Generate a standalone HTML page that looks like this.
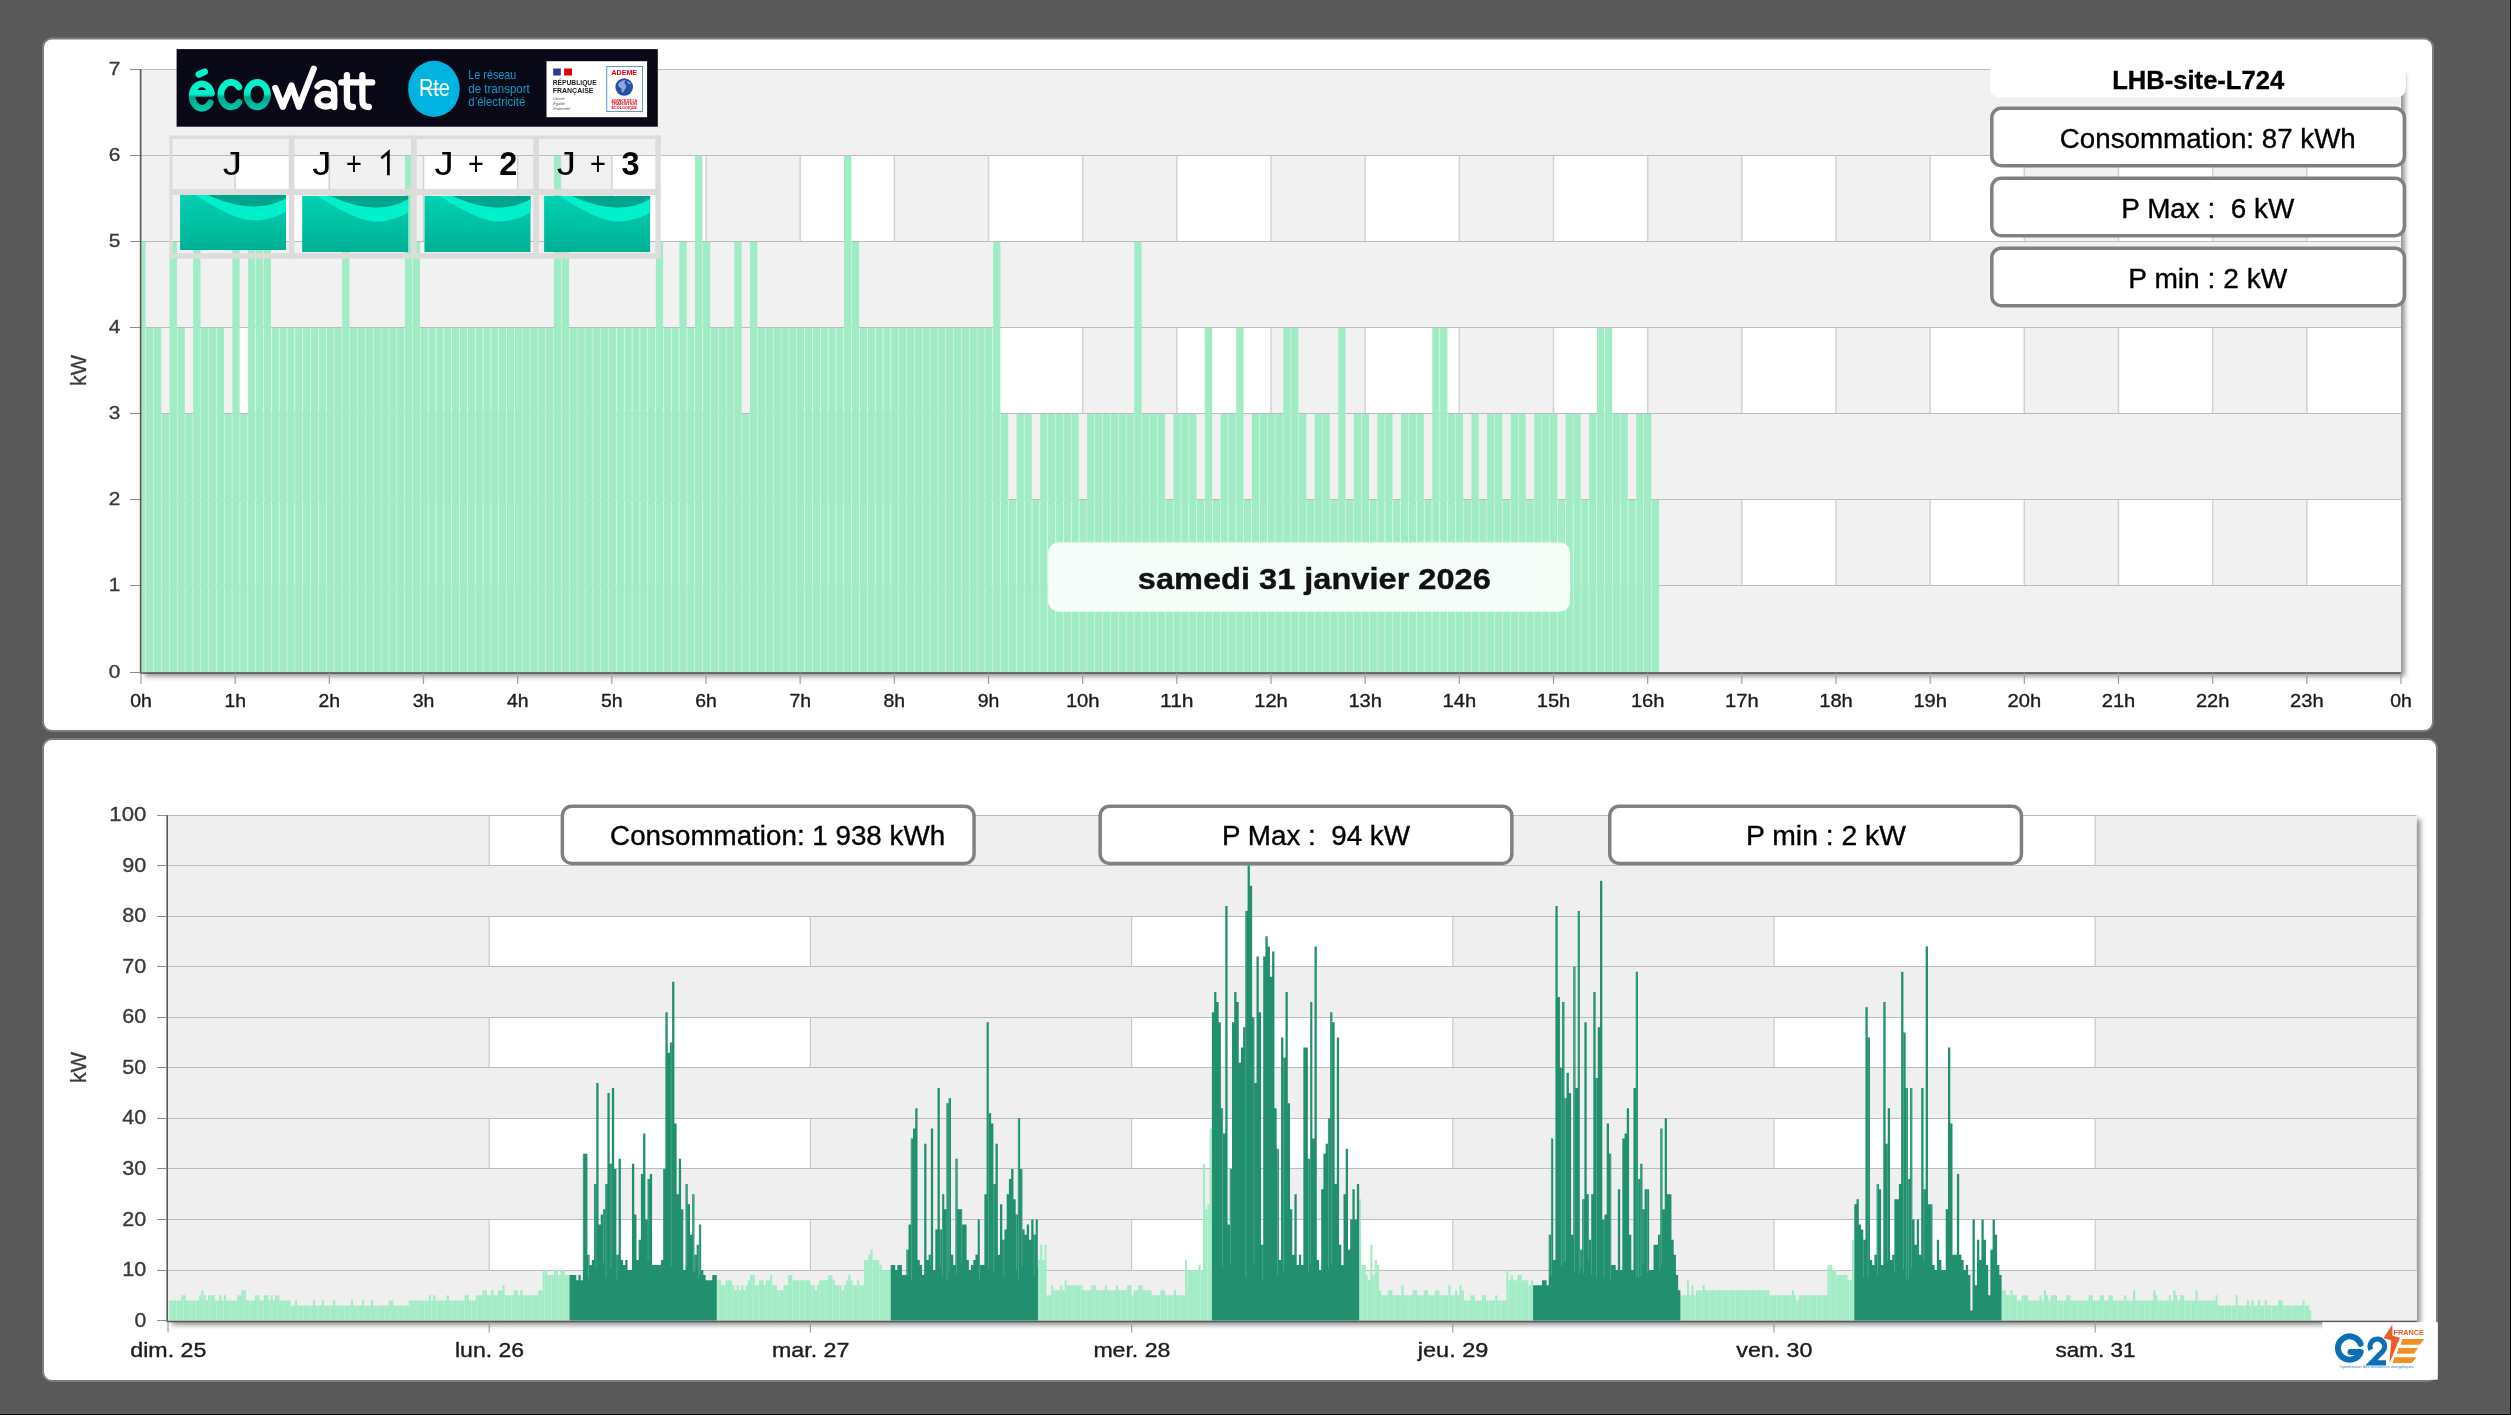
<!DOCTYPE html>
<html lang="fr"><head><meta charset="utf-8"><title>Courbe de charge</title>
<style>html,body{margin:0;padding:0;background:#595959;}body{width:2511px;height:1415px;overflow:hidden;font-family:"Liberation Sans",sans-serif;}</style></head>
<body>
<svg width="2511" height="1415" viewBox="0 0 2511 1415" font-family="Liberation Sans, sans-serif" style="display:block;will-change:transform">
<defs>
<linearGradient id="shR" x1="0" x2="1" y1="0" y2="0"><stop offset="0" stop-color="#000" stop-opacity=".38"/><stop offset=".5" stop-color="#000" stop-opacity=".12"/><stop offset="1" stop-color="#000" stop-opacity="0"/></linearGradient>
<linearGradient id="shB" x1="0" x2="0" y1="0" y2="1"><stop offset="0" stop-color="#000" stop-opacity=".38"/><stop offset=".5" stop-color="#000" stop-opacity=".12"/><stop offset="1" stop-color="#000" stop-opacity="0"/></linearGradient>
<linearGradient id="pic" x1="0" x2="0" y1="0" y2="1"><stop offset="0" stop-color="#00d2b2"/><stop offset="1" stop-color="#00b094"/></linearGradient>
<linearGradient id="eco" x1="0" x2="0" y1="0" y2="1"><stop offset="0" stop-color="#00f0c8"/><stop offset=".5" stop-color="#00f0c8"/><stop offset=".62" stop-color="#00a88e"/><stop offset="1" stop-color="#00c8a8"/></linearGradient>
<filter id="ds" x="-2%" y="-5%" width="104%" height="110%"><feGaussianBlur stdDeviation="2.4"/></filter>
</defs>
<rect width="2511" height="1415" fill="#595959"/>
<rect x="43" y="38.5" width="2390" height="692.5" rx="9" fill="#fff" stroke="#7e7e7e" stroke-width="2"/>
<rect x="43" y="739" width="2394" height="642" rx="9" fill="#fff" stroke="#7e7e7e" stroke-width="2"/>
<rect x="145.0" y="73.0" width="2260.0" height="603.5" fill="#000" fill-opacity=".42" filter="url(#ds)"/>
<rect x="141.0" y="69.0" width="2260.0" height="603.0" fill="#fff"/>
<rect x="141.00" y="69.0" width="94.17" height="603.0" fill="#f1f1f1"/>
<rect x="329.33" y="69.0" width="94.17" height="603.0" fill="#f1f1f1"/>
<rect x="517.67" y="69.0" width="94.17" height="603.0" fill="#f1f1f1"/>
<rect x="706.00" y="69.0" width="94.17" height="603.0" fill="#f1f1f1"/>
<rect x="894.33" y="69.0" width="94.17" height="603.0" fill="#f1f1f1"/>
<rect x="1082.67" y="69.0" width="94.17" height="603.0" fill="#f1f1f1"/>
<rect x="1271.00" y="69.0" width="94.17" height="603.0" fill="#f1f1f1"/>
<rect x="1459.33" y="69.0" width="94.17" height="603.0" fill="#f1f1f1"/>
<rect x="1647.67" y="69.0" width="94.17" height="603.0" fill="#f1f1f1"/>
<rect x="1836.00" y="69.0" width="94.17" height="603.0" fill="#f1f1f1"/>
<rect x="2024.33" y="69.0" width="94.17" height="603.0" fill="#f1f1f1"/>
<rect x="2212.67" y="69.0" width="94.17" height="603.0" fill="#f1f1f1"/>
<rect x="234.42" y="69.0" width="1.5" height="603.0" fill="#d2d2d2"/>
<rect x="328.58" y="69.0" width="1.5" height="603.0" fill="#d2d2d2"/>
<rect x="422.75" y="69.0" width="1.5" height="603.0" fill="#d2d2d2"/>
<rect x="516.92" y="69.0" width="1.5" height="603.0" fill="#d2d2d2"/>
<rect x="611.08" y="69.0" width="1.5" height="603.0" fill="#d2d2d2"/>
<rect x="705.25" y="69.0" width="1.5" height="603.0" fill="#d2d2d2"/>
<rect x="799.42" y="69.0" width="1.5" height="603.0" fill="#d2d2d2"/>
<rect x="893.58" y="69.0" width="1.5" height="603.0" fill="#d2d2d2"/>
<rect x="987.75" y="69.0" width="1.5" height="603.0" fill="#d2d2d2"/>
<rect x="1081.92" y="69.0" width="1.5" height="603.0" fill="#d2d2d2"/>
<rect x="1176.08" y="69.0" width="1.5" height="603.0" fill="#d2d2d2"/>
<rect x="1270.25" y="69.0" width="1.5" height="603.0" fill="#d2d2d2"/>
<rect x="1364.42" y="69.0" width="1.5" height="603.0" fill="#d2d2d2"/>
<rect x="1458.58" y="69.0" width="1.5" height="603.0" fill="#d2d2d2"/>
<rect x="1552.75" y="69.0" width="1.5" height="603.0" fill="#d2d2d2"/>
<rect x="1646.92" y="69.0" width="1.5" height="603.0" fill="#d2d2d2"/>
<rect x="1741.08" y="69.0" width="1.5" height="603.0" fill="#d2d2d2"/>
<rect x="1835.25" y="69.0" width="1.5" height="603.0" fill="#d2d2d2"/>
<rect x="1929.42" y="69.0" width="1.5" height="603.0" fill="#d2d2d2"/>
<rect x="2023.58" y="69.0" width="1.5" height="603.0" fill="#d2d2d2"/>
<rect x="2117.75" y="69.0" width="1.5" height="603.0" fill="#d2d2d2"/>
<rect x="2211.92" y="69.0" width="1.5" height="603.0" fill="#d2d2d2"/>
<rect x="2306.08" y="69.0" width="1.5" height="603.0" fill="#d2d2d2"/>
<rect x="141.0" y="69.00" width="2260.0" height="86.14" fill="#f1f1f1"/>
<rect x="141.0" y="241.29" width="2260.0" height="86.14" fill="#f1f1f1"/>
<rect x="141.0" y="413.57" width="2260.0" height="86.14" fill="#f1f1f1"/>
<rect x="141.0" y="585.86" width="2260.0" height="86.14" fill="#f1f1f1"/>
<rect x="141.0" y="585" width="2260.0" height="1" fill="#bcbcbc"/>
<rect x="141.0" y="499" width="2260.0" height="1" fill="#bcbcbc"/>
<rect x="141.0" y="413" width="2260.0" height="1" fill="#bcbcbc"/>
<rect x="141.0" y="327" width="2260.0" height="1" fill="#bcbcbc"/>
<rect x="141.0" y="241" width="2260.0" height="1" fill="#bcbcbc"/>
<rect x="141.0" y="155" width="2260.0" height="1" fill="#bcbcbc"/>
<rect x="141.0" y="69" width="2260.0" height="1" fill="#bcbcbc"/>
<path d="M141.80 672.0V242.00H145.55V672.0zM146.09 672.0V328.00H153.39V672.0zM153.94 672.0V328.00H161.24V672.0zM161.78 672.0V414.00H169.08V672.0zM169.62 672.0V242.00H176.92V672.0zM177.46 672.0V328.00H184.76V672.0zM185.31 672.0V414.00H192.61V672.0zM193.15 672.0V242.00H200.45V672.0zM200.99 672.0V328.00H208.29V672.0zM208.83 672.0V328.00H216.13V672.0zM216.68 672.0V328.00H223.98V672.0zM224.52 672.0V414.00H231.82V672.0zM232.36 672.0V242.00H239.66V672.0zM240.20 672.0V414.00H247.50V672.0zM248.05 672.0V242.00H255.35V672.0zM255.89 672.0V242.00H263.19V672.0zM263.73 672.0V242.00H271.03V672.0zM271.57 672.0V328.00H278.87V672.0zM279.42 672.0V328.00H286.72V672.0zM287.26 672.0V328.00H294.56V672.0zM295.10 672.0V328.00H302.40V672.0zM302.94 672.0V328.00H310.24V672.0zM310.79 672.0V328.00H318.09V672.0zM318.63 672.0V328.00H325.93V672.0zM326.47 672.0V328.00H333.77V672.0zM334.31 672.0V328.00H341.61V672.0zM342.16 672.0V242.00H349.46V672.0zM350.00 672.0V328.00H357.30V672.0zM357.84 672.0V328.00H365.14V672.0zM365.68 672.0V328.00H372.98V672.0zM373.53 672.0V328.00H380.83V672.0zM381.37 672.0V328.00H388.67V672.0zM389.21 672.0V328.00H396.51V672.0zM397.05 672.0V328.00H404.35V672.0zM404.90 672.0V156.00H412.20V672.0zM412.74 672.0V242.00H420.04V672.0zM420.58 672.0V328.00H427.88V672.0zM428.42 672.0V328.00H435.72V672.0zM436.27 672.0V328.00H443.57V672.0zM444.11 672.0V328.00H451.41V672.0zM451.95 672.0V328.00H459.25V672.0zM459.79 672.0V328.00H467.09V672.0zM467.64 672.0V328.00H474.94V672.0zM475.48 672.0V328.00H482.78V672.0zM483.32 672.0V328.00H490.62V672.0zM491.17 672.0V328.00H498.47V672.0zM499.01 672.0V328.00H506.31V672.0zM506.85 672.0V328.00H514.15V672.0zM514.69 672.0V328.00H521.99V672.0zM522.54 672.0V328.00H529.84V672.0zM530.38 672.0V328.00H537.68V672.0zM538.22 672.0V328.00H545.52V672.0zM546.06 672.0V328.00H553.36V672.0zM553.91 672.0V156.00H561.21V672.0zM561.75 672.0V242.00H569.05V672.0zM569.59 672.0V328.00H576.89V672.0zM577.43 672.0V328.00H584.73V672.0zM585.28 672.0V328.00H592.58V672.0zM593.12 672.0V328.00H600.42V672.0zM600.96 672.0V328.00H608.26V672.0zM608.80 672.0V328.00H616.10V672.0zM616.65 672.0V328.00H623.95V672.0zM624.49 672.0V328.00H631.79V672.0zM632.33 672.0V328.00H639.63V672.0zM640.17 672.0V328.00H647.47V672.0zM648.02 672.0V328.00H655.32V672.0zM655.86 672.0V242.00H663.16V672.0zM663.70 672.0V328.00H671.00V672.0zM671.54 672.0V328.00H678.84V672.0zM679.39 672.0V242.00H686.69V672.0zM687.23 672.0V328.00H694.53V672.0zM695.07 672.0V156.00H702.37V672.0zM702.91 672.0V242.00H710.21V672.0zM710.76 672.0V328.00H718.06V672.0zM718.60 672.0V328.00H725.90V672.0zM726.44 672.0V328.00H733.74V672.0zM734.28 672.0V242.00H741.58V672.0zM742.13 672.0V414.00H749.43V672.0zM749.97 672.0V242.00H757.27V672.0zM757.81 672.0V328.00H765.11V672.0zM765.65 672.0V328.00H772.95V672.0zM773.50 672.0V328.00H780.80V672.0zM781.34 672.0V328.00H788.64V672.0zM789.18 672.0V328.00H796.48V672.0zM797.02 672.0V328.00H804.32V672.0zM804.87 672.0V328.00H812.17V672.0zM812.71 672.0V328.00H820.01V672.0zM820.55 672.0V328.00H827.85V672.0zM828.40 672.0V328.00H835.70V672.0zM836.24 672.0V328.00H843.54V672.0zM844.08 672.0V156.00H851.38V672.0zM851.92 672.0V242.00H859.22V672.0zM859.77 672.0V328.00H867.07V672.0zM867.61 672.0V328.00H874.91V672.0zM875.45 672.0V328.00H882.75V672.0zM883.29 672.0V328.00H890.59V672.0zM891.14 672.0V328.00H898.44V672.0zM898.98 672.0V328.00H906.28V672.0zM906.82 672.0V328.00H914.12V672.0zM914.66 672.0V328.00H921.96V672.0zM922.51 672.0V328.00H929.81V672.0zM930.35 672.0V328.00H937.65V672.0zM938.19 672.0V328.00H945.49V672.0zM946.03 672.0V328.00H953.33V672.0zM953.88 672.0V328.00H961.18V672.0zM961.72 672.0V328.00H969.02V672.0zM969.56 672.0V328.00H976.86V672.0zM977.40 672.0V328.00H984.70V672.0zM985.25 672.0V328.00H992.55V672.0zM993.09 672.0V242.00H1000.39V672.0zM1000.93 672.0V414.00H1008.23V672.0zM1008.77 672.0V500.00H1016.07V672.0zM1016.62 672.0V414.00H1023.92V672.0zM1024.46 672.0V414.00H1031.76V672.0zM1032.30 672.0V500.00H1039.60V672.0zM1040.14 672.0V414.00H1047.44V672.0zM1047.99 672.0V414.00H1055.29V672.0zM1055.83 672.0V414.00H1063.13V672.0zM1063.67 672.0V414.00H1070.97V672.0zM1071.51 672.0V414.00H1078.81V672.0zM1079.36 672.0V500.00H1086.66V672.0zM1087.20 672.0V414.00H1094.50V672.0zM1095.04 672.0V414.00H1102.34V672.0zM1102.88 672.0V414.00H1110.18V672.0zM1110.73 672.0V414.00H1118.03V672.0zM1118.57 672.0V414.00H1125.87V672.0zM1126.41 672.0V414.00H1133.71V672.0zM1134.25 672.0V242.00H1141.55V672.0zM1142.10 672.0V414.00H1149.40V672.0zM1149.94 672.0V414.00H1157.24V672.0zM1157.78 672.0V414.00H1165.08V672.0zM1165.63 672.0V500.00H1172.93V672.0zM1173.47 672.0V414.00H1180.77V672.0zM1181.31 672.0V414.00H1188.61V672.0zM1189.15 672.0V414.00H1196.45V672.0zM1197.00 672.0V500.00H1204.30V672.0zM1204.84 672.0V328.00H1212.14V672.0zM1212.68 672.0V500.00H1219.98V672.0zM1220.52 672.0V414.00H1227.82V672.0zM1228.37 672.0V414.00H1235.67V672.0zM1236.21 672.0V328.00H1243.51V672.0zM1244.05 672.0V500.00H1251.35V672.0zM1251.89 672.0V414.00H1259.19V672.0zM1259.74 672.0V414.00H1267.04V672.0zM1267.58 672.0V414.00H1274.88V672.0zM1275.42 672.0V414.00H1282.72V672.0zM1283.26 672.0V328.00H1290.56V672.0zM1291.11 672.0V328.00H1298.41V672.0zM1298.95 672.0V414.00H1306.25V672.0zM1306.79 672.0V500.00H1314.09V672.0zM1314.63 672.0V414.00H1321.93V672.0zM1322.48 672.0V414.00H1329.78V672.0zM1330.32 672.0V500.00H1337.62V672.0zM1338.16 672.0V328.00H1345.46V672.0zM1346.00 672.0V500.00H1353.30V672.0zM1353.85 672.0V414.00H1361.15V672.0zM1361.69 672.0V414.00H1368.99V672.0zM1369.53 672.0V500.00H1376.83V672.0zM1377.37 672.0V414.00H1384.67V672.0zM1385.22 672.0V414.00H1392.52V672.0zM1393.06 672.0V500.00H1400.36V672.0zM1400.90 672.0V414.00H1408.20V672.0zM1408.74 672.0V414.00H1416.04V672.0zM1416.59 672.0V414.00H1423.89V672.0zM1424.43 672.0V500.00H1431.73V672.0zM1432.27 672.0V328.00H1439.57V672.0zM1440.11 672.0V328.00H1447.41V672.0zM1447.96 672.0V414.00H1455.26V672.0zM1455.80 672.0V414.00H1463.10V672.0zM1463.64 672.0V500.00H1470.94V672.0zM1471.49 672.0V414.00H1478.79V672.0zM1479.33 672.0V500.00H1486.63V672.0zM1487.17 672.0V414.00H1494.47V672.0zM1495.01 672.0V414.00H1502.31V672.0zM1502.86 672.0V500.00H1510.16V672.0zM1510.70 672.0V414.00H1518.00V672.0zM1518.54 672.0V414.00H1525.84V672.0zM1526.38 672.0V500.00H1533.68V672.0zM1534.23 672.0V414.00H1541.53V672.0zM1542.07 672.0V414.00H1549.37V672.0zM1549.91 672.0V414.00H1557.21V672.0zM1557.75 672.0V500.00H1565.05V672.0zM1565.60 672.0V414.00H1572.90V672.0zM1573.44 672.0V414.00H1580.74V672.0zM1581.28 672.0V500.00H1588.58V672.0zM1589.12 672.0V414.00H1596.42V672.0zM1596.97 672.0V328.00H1604.27V672.0zM1604.81 672.0V328.00H1612.11V672.0zM1612.65 672.0V414.00H1619.95V672.0zM1620.49 672.0V414.00H1627.79V672.0zM1628.34 672.0V500.00H1635.64V672.0zM1636.18 672.0V414.00H1643.48V672.0zM1644.02 672.0V414.00H1651.32V672.0zM1651.86 672.0V500.00H1659.16V672.0z" fill="#a0ecc4"/>
<rect x="139.8" y="69.0" width="1.7" height="603.8" fill="#5a5a5a"/>
<rect x="139.8" y="672.3" width="2261.2" height="1.6" fill="#5a5a5a"/>
<rect x="130.0" y="672" width="10" height="1" fill="#8c8c8c"/>
<text x="120.4" y="677.5" font-size="18.4" text-anchor="end" font-weight="normal" fill="#3a3a3a" stroke="#3a3a3a" stroke-width="0.35" textLength="11.6" lengthAdjust="spacingAndGlyphs" >0</text>
<rect x="130.0" y="585" width="10" height="1" fill="#8c8c8c"/>
<text x="120.4" y="591.4" font-size="18.4" text-anchor="end" font-weight="normal" fill="#3a3a3a" stroke="#3a3a3a" stroke-width="0.35" textLength="11.6" lengthAdjust="spacingAndGlyphs" >1</text>
<rect x="130.0" y="499" width="10" height="1" fill="#8c8c8c"/>
<text x="120.4" y="505.2" font-size="18.4" text-anchor="end" font-weight="normal" fill="#3a3a3a" stroke="#3a3a3a" stroke-width="0.35" textLength="11.6" lengthAdjust="spacingAndGlyphs" >2</text>
<rect x="130.0" y="413" width="10" height="1" fill="#8c8c8c"/>
<text x="120.4" y="419.1" font-size="18.4" text-anchor="end" font-weight="normal" fill="#3a3a3a" stroke="#3a3a3a" stroke-width="0.35" textLength="11.6" lengthAdjust="spacingAndGlyphs" >3</text>
<rect x="130.0" y="327" width="10" height="1" fill="#8c8c8c"/>
<text x="120.4" y="332.9" font-size="18.4" text-anchor="end" font-weight="normal" fill="#3a3a3a" stroke="#3a3a3a" stroke-width="0.35" textLength="11.6" lengthAdjust="spacingAndGlyphs" >4</text>
<rect x="130.0" y="241" width="10" height="1" fill="#8c8c8c"/>
<text x="120.4" y="246.8" font-size="18.4" text-anchor="end" font-weight="normal" fill="#3a3a3a" stroke="#3a3a3a" stroke-width="0.35" textLength="11.6" lengthAdjust="spacingAndGlyphs" >5</text>
<rect x="130.0" y="155" width="10" height="1" fill="#8c8c8c"/>
<text x="120.4" y="160.6" font-size="18.4" text-anchor="end" font-weight="normal" fill="#3a3a3a" stroke="#3a3a3a" stroke-width="0.35" textLength="11.6" lengthAdjust="spacingAndGlyphs" >6</text>
<rect x="130.0" y="69" width="10" height="1" fill="#8c8c8c"/>
<text x="120.4" y="74.5" font-size="18.4" text-anchor="end" font-weight="normal" fill="#3a3a3a" stroke="#3a3a3a" stroke-width="0.35" textLength="11.6" lengthAdjust="spacingAndGlyphs" >7</text>
<rect x="140.40" y="673.0" width="1.2" height="11" fill="#a0a0a0"/>
<text x="141.0" y="707.2" font-size="18.6" text-anchor="middle" font-weight="normal" fill="#1c1c1c" stroke="#1c1c1c" stroke-width="0.35" textLength="21.6" lengthAdjust="spacingAndGlyphs" >0h</text>
<rect x="234.57" y="673.0" width="1.2" height="11" fill="#a0a0a0"/>
<text x="235.2" y="707.2" font-size="18.6" text-anchor="middle" font-weight="normal" fill="#1c1c1c" stroke="#1c1c1c" stroke-width="0.35" textLength="21.6" lengthAdjust="spacingAndGlyphs" >1h</text>
<rect x="328.73" y="673.0" width="1.2" height="11" fill="#a0a0a0"/>
<text x="329.3" y="707.2" font-size="18.6" text-anchor="middle" font-weight="normal" fill="#1c1c1c" stroke="#1c1c1c" stroke-width="0.35" textLength="21.6" lengthAdjust="spacingAndGlyphs" >2h</text>
<rect x="422.90" y="673.0" width="1.2" height="11" fill="#a0a0a0"/>
<text x="423.5" y="707.2" font-size="18.6" text-anchor="middle" font-weight="normal" fill="#1c1c1c" stroke="#1c1c1c" stroke-width="0.35" textLength="21.6" lengthAdjust="spacingAndGlyphs" >3h</text>
<rect x="517.07" y="673.0" width="1.2" height="11" fill="#a0a0a0"/>
<text x="517.7" y="707.2" font-size="18.6" text-anchor="middle" font-weight="normal" fill="#1c1c1c" stroke="#1c1c1c" stroke-width="0.35" textLength="21.6" lengthAdjust="spacingAndGlyphs" >4h</text>
<rect x="611.23" y="673.0" width="1.2" height="11" fill="#a0a0a0"/>
<text x="611.8" y="707.2" font-size="18.6" text-anchor="middle" font-weight="normal" fill="#1c1c1c" stroke="#1c1c1c" stroke-width="0.35" textLength="21.6" lengthAdjust="spacingAndGlyphs" >5h</text>
<rect x="705.40" y="673.0" width="1.2" height="11" fill="#a0a0a0"/>
<text x="706.0" y="707.2" font-size="18.6" text-anchor="middle" font-weight="normal" fill="#1c1c1c" stroke="#1c1c1c" stroke-width="0.35" textLength="21.6" lengthAdjust="spacingAndGlyphs" >6h</text>
<rect x="799.57" y="673.0" width="1.2" height="11" fill="#a0a0a0"/>
<text x="800.2" y="707.2" font-size="18.6" text-anchor="middle" font-weight="normal" fill="#1c1c1c" stroke="#1c1c1c" stroke-width="0.35" textLength="21.6" lengthAdjust="spacingAndGlyphs" >7h</text>
<rect x="893.73" y="673.0" width="1.2" height="11" fill="#a0a0a0"/>
<text x="894.3" y="707.2" font-size="18.6" text-anchor="middle" font-weight="normal" fill="#1c1c1c" stroke="#1c1c1c" stroke-width="0.35" textLength="21.6" lengthAdjust="spacingAndGlyphs" >8h</text>
<rect x="987.90" y="673.0" width="1.2" height="11" fill="#a0a0a0"/>
<text x="988.5" y="707.2" font-size="18.6" text-anchor="middle" font-weight="normal" fill="#1c1c1c" stroke="#1c1c1c" stroke-width="0.35" textLength="21.6" lengthAdjust="spacingAndGlyphs" >9h</text>
<rect x="1082.07" y="673.0" width="1.2" height="11" fill="#a0a0a0"/>
<text x="1082.7" y="707.2" font-size="18.6" text-anchor="middle" font-weight="normal" fill="#1c1c1c" stroke="#1c1c1c" stroke-width="0.35" textLength="33.6" lengthAdjust="spacingAndGlyphs" >10h</text>
<rect x="1176.23" y="673.0" width="1.2" height="11" fill="#a0a0a0"/>
<text x="1176.8" y="707.2" font-size="18.6" text-anchor="middle" font-weight="normal" fill="#1c1c1c" stroke="#1c1c1c" stroke-width="0.35" textLength="33.6" lengthAdjust="spacingAndGlyphs" >11h</text>
<rect x="1270.40" y="673.0" width="1.2" height="11" fill="#a0a0a0"/>
<text x="1271.0" y="707.2" font-size="18.6" text-anchor="middle" font-weight="normal" fill="#1c1c1c" stroke="#1c1c1c" stroke-width="0.35" textLength="33.6" lengthAdjust="spacingAndGlyphs" >12h</text>
<rect x="1364.57" y="673.0" width="1.2" height="11" fill="#a0a0a0"/>
<text x="1365.2" y="707.2" font-size="18.6" text-anchor="middle" font-weight="normal" fill="#1c1c1c" stroke="#1c1c1c" stroke-width="0.35" textLength="33.6" lengthAdjust="spacingAndGlyphs" >13h</text>
<rect x="1458.73" y="673.0" width="1.2" height="11" fill="#a0a0a0"/>
<text x="1459.3" y="707.2" font-size="18.6" text-anchor="middle" font-weight="normal" fill="#1c1c1c" stroke="#1c1c1c" stroke-width="0.35" textLength="33.6" lengthAdjust="spacingAndGlyphs" >14h</text>
<rect x="1552.90" y="673.0" width="1.2" height="11" fill="#a0a0a0"/>
<text x="1553.5" y="707.2" font-size="18.6" text-anchor="middle" font-weight="normal" fill="#1c1c1c" stroke="#1c1c1c" stroke-width="0.35" textLength="33.6" lengthAdjust="spacingAndGlyphs" >15h</text>
<rect x="1647.07" y="673.0" width="1.2" height="11" fill="#a0a0a0"/>
<text x="1647.7" y="707.2" font-size="18.6" text-anchor="middle" font-weight="normal" fill="#1c1c1c" stroke="#1c1c1c" stroke-width="0.35" textLength="33.6" lengthAdjust="spacingAndGlyphs" >16h</text>
<rect x="1741.23" y="673.0" width="1.2" height="11" fill="#a0a0a0"/>
<text x="1741.8" y="707.2" font-size="18.6" text-anchor="middle" font-weight="normal" fill="#1c1c1c" stroke="#1c1c1c" stroke-width="0.35" textLength="33.6" lengthAdjust="spacingAndGlyphs" >17h</text>
<rect x="1835.40" y="673.0" width="1.2" height="11" fill="#a0a0a0"/>
<text x="1836.0" y="707.2" font-size="18.6" text-anchor="middle" font-weight="normal" fill="#1c1c1c" stroke="#1c1c1c" stroke-width="0.35" textLength="33.6" lengthAdjust="spacingAndGlyphs" >18h</text>
<rect x="1929.57" y="673.0" width="1.2" height="11" fill="#a0a0a0"/>
<text x="1930.2" y="707.2" font-size="18.6" text-anchor="middle" font-weight="normal" fill="#1c1c1c" stroke="#1c1c1c" stroke-width="0.35" textLength="33.6" lengthAdjust="spacingAndGlyphs" >19h</text>
<rect x="2023.73" y="673.0" width="1.2" height="11" fill="#a0a0a0"/>
<text x="2024.3" y="707.2" font-size="18.6" text-anchor="middle" font-weight="normal" fill="#1c1c1c" stroke="#1c1c1c" stroke-width="0.35" textLength="33.6" lengthAdjust="spacingAndGlyphs" >20h</text>
<rect x="2117.90" y="673.0" width="1.2" height="11" fill="#a0a0a0"/>
<text x="2118.5" y="707.2" font-size="18.6" text-anchor="middle" font-weight="normal" fill="#1c1c1c" stroke="#1c1c1c" stroke-width="0.35" textLength="33.6" lengthAdjust="spacingAndGlyphs" >21h</text>
<rect x="2212.07" y="673.0" width="1.2" height="11" fill="#a0a0a0"/>
<text x="2212.7" y="707.2" font-size="18.6" text-anchor="middle" font-weight="normal" fill="#1c1c1c" stroke="#1c1c1c" stroke-width="0.35" textLength="33.6" lengthAdjust="spacingAndGlyphs" >22h</text>
<rect x="2306.23" y="673.0" width="1.2" height="11" fill="#a0a0a0"/>
<text x="2306.8" y="707.2" font-size="18.6" text-anchor="middle" font-weight="normal" fill="#1c1c1c" stroke="#1c1c1c" stroke-width="0.35" textLength="33.6" lengthAdjust="spacingAndGlyphs" >23h</text>
<rect x="2400.40" y="673.0" width="1.2" height="11" fill="#a0a0a0"/>
<text x="2401.0" y="707.2" font-size="18.6" text-anchor="middle" font-weight="normal" fill="#1c1c1c" stroke="#1c1c1c" stroke-width="0.35" textLength="21.6" lengthAdjust="spacingAndGlyphs" >0h</text>
<text x="0" y="0" font-size="21.4" text-anchor="middle" font-weight="normal" fill="#3a3a3a" stroke="#3a3a3a" stroke-width="0.35" textLength="31" lengthAdjust="spacingAndGlyphs" transform="translate(86.3 370.5) rotate(-90)">kW</text>
<g id="eco">
<rect x="176.6" y="49.1" width="481.2" height="77.6" fill="#090817"/>
<linearGradient id="ecoU" gradientUnits="userSpaceOnUse" x1="0" x2="0" y1="70" y2="110"><stop offset="0" stop-color="#00f2cc"/><stop offset=".60" stop-color="#00f2cc"/><stop offset=".68" stop-color="#00a58c"/><stop offset="1" stop-color="#00caaa"/></linearGradient>
<g fill="none" stroke="url(#ecoU)" stroke-width="6.7" stroke-linecap="round" stroke-linejoin="round">
<path d="M198.9 74.4L204.6 71.7"/>
<path d="M192.4 93.3H211.5A9.8 12.2 0 1 0 210.2 102.7"/>
<path d="M238.9 86.9A10.2 12.2 0 1 0 238.9 102.3"/>
<ellipse cx="257.3" cy="94.6" rx="10.2" ry="12.2"/>
</g>
<g fill="none" stroke="#fff" stroke-width="6.3" stroke-linecap="round" stroke-linejoin="round">
<path d="M275.3 88L282.8 106.8L291.5 85.5L298.8 106.8L313.7 68.8"/>
<path d="M317.6 86.4C321 81.3 334.2 80.3 334.2 91V107"/>
<ellipse cx="325.9" cy="100.3" rx="8.3" ry="6.3"/>
<path d="M346.9 75.2V100.5Q346.9 107 353 107M341.3 82.4H353.8"/>
<path d="M362.4 75.2V100.5Q362.4 107 368.8 107M356.8 82.4H372.2"/>
</g>
<ellipse cx="433.9" cy="88.9" rx="25.8" ry="28.1" fill="#00b3e0"/>
<text x="434.4" y="96.3" font-size="23" fill="#fff" text-anchor="middle" textLength="31" lengthAdjust="spacingAndGlyphs">Rte</text>
<rect x="423" y="88.6" width="26" height="1.3" fill="#fff"/>
<text x="468.3" y="79.2" font-size="12.2" fill="#0d9dc6" textLength="48" lengthAdjust="spacingAndGlyphs">Le réseau</text>
<text x="468.3" y="92.5" font-size="12.2" fill="#0d9dc6" textLength="61.5" lengthAdjust="spacingAndGlyphs">de transport</text>
<text x="468.3" y="105.7" font-size="12.2" fill="#0d9dc6" textLength="57" lengthAdjust="spacingAndGlyphs">d’électricité</text>
<rect x="546.5" y="61.2" width="100.6" height="56" fill="#fff"/>
<rect x="553.2" y="68.5" width="7.6" height="7" fill="#2b3a8c"/><rect x="564" y="68.5" width="8" height="7" fill="#e1000f"/>
<text x="552.7" y="84.6" font-size="7.6" font-weight="bold" fill="#1a1a1a" textLength="44" lengthAdjust="spacingAndGlyphs">RÉPUBLIQUE</text>
<text x="552.7" y="93.2" font-size="7.6" font-weight="bold" fill="#1a1a1a" textLength="40.8" lengthAdjust="spacingAndGlyphs">FRANÇAISE</text>
<text x="553.2" y="100.0" font-size="3.6" font-style="italic" fill="#555" textLength="11.5" lengthAdjust="spacingAndGlyphs">Liberté</text>
<text x="553.2" y="104.8" font-size="3.6" font-style="italic" fill="#555" textLength="11.8" lengthAdjust="spacingAndGlyphs">Égalité</text>
<text x="553.2" y="109.7" font-size="3.6" font-style="italic" fill="#555" textLength="17" lengthAdjust="spacingAndGlyphs">Fraternité</text>
<rect x="606.8" y="66.4" width="35.6" height="45.2" fill="#fff" stroke="#4a78bd" stroke-width="0.8"/>
<text x="624.3" y="75" font-size="6.4" font-weight="bold" fill="#e1000f" text-anchor="middle" textLength="25.6" lengthAdjust="spacingAndGlyphs">ADEME</text>
<circle cx="624.2" cy="87" r="8.8" fill="#2350a8"/>
<path d="M619.5 82.5q3-3 6-2.5q-2 2-.5 4q2 1.500 .5 4.500q-1.500 3-3 4.500q-1.500-2-1-4.500q-2.500-1-3.500-3.500q0-1.500 1.500-2.500z" fill="#8ea6dc"/><path d="M627.500 81q2.500 1 3.500 3q-1.500 .5-2.500-.5q-1.500-.5-1-2.500z" fill="#8ea6dc"/>
<text x="624.3" y="101.8" font-size="2.9" font-weight="bold" fill="#e1000f" text-anchor="middle" textLength="25.6" lengthAdjust="spacingAndGlyphs">AGENCE DE LA</text>
<text x="624.3" y="105.4" font-size="2.9" font-weight="bold" fill="#e1000f" text-anchor="middle" textLength="25.6" lengthAdjust="spacingAndGlyphs">TRANSITION</text>
<text x="624.3" y="109.0" font-size="2.9" font-weight="bold" fill="#e1000f" text-anchor="middle" textLength="25.6" lengthAdjust="spacingAndGlyphs">ÉCOLOGIQUE</text>
<g fill="#dcdcdc">
<rect x="169.4" y="135.6" width="491.4" height="3.4"/>
<rect x="169.4" y="188.9" width="491.4" height="6.1"/>
<rect x="169.4" y="253.1" width="491.4" height="5.4"/>
<rect x="169.4" y="135.6" width="3.2" height="122.9"/>
<rect x="655.4" y="135.6" width="5.4" height="122.9"/>
<rect x="288.7" y="135.6" width="5.7" height="122.9"/>
<rect x="411.0" y="135.6" width="5.7" height="122.9"/>
<rect x="533.3" y="135.6" width="5.7" height="122.9"/>
</g>
<g transform="translate(180.1 195)"><rect width="105.9" height="55" fill="url(#pic)"/>
<path d="M15 0 C 38 14, 58 26, 76 25.500 C 88 25, 98 21, 105.9 16.500 L105.9 3 C 98 8, 86 11.800, 72 11.500 C 56 11, 42 6, 28 0z" fill="#00f0cc"/>
<path d="M28 0 C 42 6, 56 11, 72 11.500 C 86 11.800, 98 8, 105.9 3 L105.9 0z" fill="#00a48a"/></g>
<g transform="translate(302.2 195.9)"><rect width="106" height="56.1" fill="url(#pic)"/>
<path d="M15 0 C 38 14, 58 26, 76 25.500 C 88 25, 98 21, 106 16.500 L106 3 C 98 8, 86 11.800, 72 11.500 C 56 11, 42 6, 28 0z" fill="#00f0cc"/>
<path d="M28 0 C 42 6, 56 11, 72 11.500 C 86 11.800, 98 8, 106 3 L106 0z" fill="#00a48a"/></g>
<g transform="translate(424.5 195.9)"><rect width="106" height="56.1" fill="url(#pic)"/>
<path d="M15 0 C 38 14, 58 26, 76 25.500 C 88 25, 98 21, 106 16.500 L106 3 C 98 8, 86 11.800, 72 11.500 C 56 11, 42 6, 28 0z" fill="#00f0cc"/>
<path d="M28 0 C 42 6, 56 11, 72 11.500 C 86 11.800, 98 8, 106 3 L106 0z" fill="#00a48a"/></g>
<g transform="translate(544.1 195.9)"><rect width="106" height="56.1" fill="url(#pic)"/>
<path d="M15 0 C 38 14, 58 26, 76 25.500 C 88 25, 98 21, 106 16.500 L106 3 C 98 8, 86 11.800, 72 11.500 C 56 11, 42 6, 28 0z" fill="#00f0cc"/>
<path d="M28 0 C 42 6, 56 11, 72 11.500 C 86 11.800, 98 8, 106 3 L106 0z" fill="#00a48a"/></g>
<text x="222.65" y="175.2" font-size="32.5" font-weight="normal" fill="#000" textLength="19.2" lengthAdjust="spacingAndGlyphs">J</text>
<text x="312.15" y="175.2" font-size="32.5" font-weight="normal" fill="#000" textLength="19.2" lengthAdjust="spacingAndGlyphs">J</text>
<text x="345.9" y="174.89999999999998" font-size="32.5" font-weight="normal" fill="#000" textLength="15.9" lengthAdjust="spacingAndGlyphs">+</text>
<path d="M381.3 158.2L388.4 152.2V175.2" fill="none" stroke="#000" stroke-width="2.7"/>
<text x="434.55" y="175.2" font-size="32.5" font-weight="normal" fill="#000" textLength="19.2" lengthAdjust="spacingAndGlyphs">J</text>
<text x="468.0" y="174.89999999999998" font-size="32.5" font-weight="normal" fill="#000" textLength="15.9" lengthAdjust="spacingAndGlyphs">+</text>
<text x="499.2" y="175.2" font-size="32.5" font-weight="bold" fill="#000">2</text>
<text x="556.65" y="175.2" font-size="32.5" font-weight="normal" fill="#000" textLength="19.2" lengthAdjust="spacingAndGlyphs">J</text>
<text x="590.1" y="174.89999999999998" font-size="32.5" font-weight="normal" fill="#000" textLength="15.9" lengthAdjust="spacingAndGlyphs">+</text>
<text x="621.4" y="175.2" font-size="32.5" font-weight="bold" fill="#000">3</text>
</g>
<rect x="1990.1" y="60" width="415.8" height="37.3" rx="9" fill="#fff"/>
<text x="2198.2" y="89" font-size="25.6" text-anchor="middle" font-weight="bold" fill="#000" stroke="#000" stroke-width="0.35" textLength="172" lengthAdjust="spacingAndGlyphs" >LHB-site-L724</text>
<rect x="1991.8" y="108.15" width="412.6" height="57.5" rx="9.5" fill="#fff" stroke="#808080" stroke-width="3.5"/>
<text x="2207.8" y="147.9" font-size="27" text-anchor="middle" font-weight="normal" fill="#000" stroke="#000" stroke-width="0.35" textLength="296" lengthAdjust="spacingAndGlyphs" >Consommation: 87 kWh</text>
<rect x="1991.8" y="178.15" width="412.6" height="57.5" rx="9.5" fill="#fff" stroke="#808080" stroke-width="3.5"/>
<text x="2207.8" y="217.9" font-size="27" text-anchor="middle" font-weight="normal" fill="#000" stroke="#000" stroke-width="0.35" textLength="173" lengthAdjust="spacingAndGlyphs" >P Max :&#160;&#160;6 kW</text>
<rect x="1991.8" y="248.15" width="412.6" height="57.5" rx="9.5" fill="#fff" stroke="#808080" stroke-width="3.5"/>
<text x="2207.8" y="287.9" font-size="27" text-anchor="middle" font-weight="normal" fill="#000" stroke="#000" stroke-width="0.35" textLength="159" lengthAdjust="spacingAndGlyphs" >P min : 2 kW</text>
<rect x="1048.1" y="542.3" width="522" height="69.5" rx="11" fill="#fff" fill-opacity=".88"/>
<text x="1314.3" y="589.1" font-size="29.3" text-anchor="middle" font-weight="bold" fill="#111" stroke="#111" stroke-width="0.35" textLength="353" lengthAdjust="spacingAndGlyphs" >samedi 31 janvier 2026</text>
<rect x="172.0" y="819.0" width="2248.6" height="506.0999999999999" fill="#000" fill-opacity=".42" filter="url(#ds)"/>
<rect x="168.0" y="815.0" width="2248.6" height="505.5999999999999" fill="#fff"/>
<rect x="168.00" y="815.0" width="321.20" height="505.5999999999999" fill="#efefef"/>
<rect x="810.40" y="815.0" width="321.20" height="505.5999999999999" fill="#efefef"/>
<rect x="1452.80" y="815.0" width="321.20" height="505.5999999999999" fill="#efefef"/>
<rect x="2095.20" y="815.0" width="321.20" height="505.5999999999999" fill="#efefef"/>
<rect x="488.65" y="815.0" width="1.1" height="505.5999999999999" fill="#c6c6c6"/>
<rect x="809.85" y="815.0" width="1.1" height="505.5999999999999" fill="#c6c6c6"/>
<rect x="1131.05" y="815.0" width="1.1" height="505.5999999999999" fill="#c6c6c6"/>
<rect x="1452.25" y="815.0" width="1.1" height="505.5999999999999" fill="#c6c6c6"/>
<rect x="1773.45" y="815.0" width="1.1" height="505.5999999999999" fill="#c6c6c6"/>
<rect x="2094.65" y="815.0" width="1.1" height="505.5999999999999" fill="#c6c6c6"/>
<rect x="168.0" y="865.56" width="2248.6" height="50.56" fill="#efefef"/>
<rect x="168.0" y="966.68" width="2248.6" height="50.56" fill="#efefef"/>
<rect x="168.0" y="1067.80" width="2248.6" height="50.56" fill="#efefef"/>
<rect x="168.0" y="1168.92" width="2248.6" height="50.56" fill="#efefef"/>
<rect x="168.0" y="1270.04" width="2248.6" height="50.56" fill="#efefef"/>
<rect x="168.0" y="1270" width="2248.6" height="1" fill="#bcbcbc"/>
<rect x="168.0" y="1219" width="2248.6" height="1" fill="#bcbcbc"/>
<rect x="168.0" y="1168" width="2248.6" height="1" fill="#bcbcbc"/>
<rect x="168.0" y="1118" width="2248.6" height="1" fill="#bcbcbc"/>
<rect x="168.0" y="1067" width="2248.6" height="1" fill="#bcbcbc"/>
<rect x="168.0" y="1017" width="2248.6" height="1" fill="#bcbcbc"/>
<rect x="168.0" y="966" width="2248.6" height="1" fill="#bcbcbc"/>
<rect x="168.0" y="916" width="2248.6" height="1" fill="#bcbcbc"/>
<rect x="168.0" y="865" width="2248.6" height="1" fill="#bcbcbc"/>
<rect x="168.0" y="815" width="2248.6" height="1" fill="#bcbcbc"/>
<path d="M168.80 1320.6V1300.38H169.93V1320.6zM170.23 1320.6V1300.38H172.34V1320.6zM172.46 1320.6V1300.38H174.57V1320.6zM174.69 1320.6V1300.38H176.62V1320.6zM176.92 1320.6V1300.38H179.03V1320.6zM179.15 1320.6V1300.38H181.26V1320.6zM181.38 1320.6V1295.32H183.31V1320.6zM183.61 1320.6V1295.32H185.72V1320.6zM185.84 1320.6V1300.38H187.95V1320.6zM188.07 1320.6V1300.38H190.01V1320.6zM190.31 1320.6V1300.38H192.42V1320.6zM192.54 1320.6V1300.38H194.65V1320.6zM194.77 1320.6V1300.38H196.70V1320.6zM197.00 1320.6V1300.38H199.11V1320.6zM199.23 1320.6V1295.32H201.34V1320.6zM201.46 1320.6V1290.26H203.39V1320.6zM203.69 1320.6V1295.32H205.80V1320.6zM205.92 1320.6V1300.38H208.03V1320.6zM208.15 1320.6V1295.32H210.08V1320.6zM210.38 1320.6V1295.32H212.49V1320.6zM212.61 1320.6V1295.32H214.72V1320.6zM214.84 1320.6V1300.38H216.77V1320.6zM217.07 1320.6V1300.38H219.18V1320.6zM219.30 1320.6V1295.32H221.41V1320.6zM221.53 1320.6V1300.38H223.46V1320.6zM223.76 1320.6V1295.32H225.87V1320.6zM225.99 1320.6V1300.38H228.10V1320.6zM228.22 1320.6V1300.38H230.16V1320.6zM230.46 1320.6V1300.38H232.57V1320.6zM232.69 1320.6V1300.38H234.80V1320.6zM234.92 1320.6V1300.38H236.85V1320.6zM237.15 1320.6V1295.32H239.26V1320.6zM239.38 1320.6V1295.32H241.49V1320.6zM241.61 1320.6V1290.26H243.54V1320.6zM243.84 1320.6V1290.26H245.95V1320.6zM246.07 1320.6V1300.38H248.18V1320.6zM248.30 1320.6V1300.38H250.23V1320.6zM250.53 1320.6V1300.38H252.64V1320.6zM252.76 1320.6V1300.38H254.87V1320.6zM254.99 1320.6V1295.32H256.92V1320.6zM257.22 1320.6V1295.32H259.33V1320.6zM259.45 1320.6V1300.38H261.56V1320.6zM261.68 1320.6V1300.38H263.61V1320.6zM263.91 1320.6V1295.32H266.02V1320.6zM266.14 1320.6V1295.32H268.25V1320.6zM268.38 1320.6V1300.38H270.31V1320.6zM270.61 1320.6V1295.32H272.72V1320.6zM272.84 1320.6V1300.38H274.95V1320.6zM275.07 1320.6V1295.32H277.00V1320.6zM277.30 1320.6V1295.32H279.41V1320.6zM279.53 1320.6V1300.38H281.64V1320.6zM281.76 1320.6V1300.38H283.69V1320.6zM283.99 1320.6V1300.38H286.10V1320.6zM286.22 1320.6V1300.38H288.33V1320.6zM288.45 1320.6V1300.38H290.38V1320.6zM290.68 1320.6V1305.43H292.79V1320.6zM292.91 1320.6V1305.43H295.02V1320.6zM295.14 1320.6V1300.38H297.07V1320.6zM297.37 1320.6V1305.43H299.48V1320.6zM299.60 1320.6V1305.43H301.71V1320.6zM301.83 1320.6V1305.43H303.76V1320.6zM304.06 1320.6V1305.43H306.17V1320.6zM306.29 1320.6V1305.43H308.41V1320.6zM308.52 1320.6V1305.43H310.46V1320.6zM310.76 1320.6V1305.43H312.87V1320.6zM312.99 1320.6V1300.38H315.10V1320.6zM315.22 1320.6V1305.43H317.15V1320.6zM317.45 1320.6V1305.43H319.56V1320.6zM319.68 1320.6V1305.43H321.79V1320.6zM321.91 1320.6V1300.38H323.84V1320.6zM324.14 1320.6V1305.43H326.25V1320.6zM326.37 1320.6V1305.43H328.48V1320.6zM328.60 1320.6V1305.43H330.53V1320.6zM330.83 1320.6V1305.43H332.94V1320.6zM333.06 1320.6V1300.38H335.17V1320.6zM335.29 1320.6V1305.43H337.22V1320.6zM337.52 1320.6V1305.43H339.63V1320.6zM339.75 1320.6V1305.43H341.86V1320.6zM341.98 1320.6V1305.43H343.91V1320.6zM344.21 1320.6V1305.43H346.32V1320.6zM346.44 1320.6V1305.43H348.56V1320.6zM348.68 1320.6V1305.43H350.61V1320.6zM350.91 1320.6V1300.38H353.02V1320.6zM353.14 1320.6V1305.43H355.25V1320.6zM355.37 1320.6V1305.43H357.30V1320.6zM357.60 1320.6V1305.43H359.71V1320.6zM359.83 1320.6V1305.43H361.94V1320.6zM362.06 1320.6V1300.38H363.99V1320.6zM364.29 1320.6V1305.43H366.40V1320.6zM366.52 1320.6V1305.43H368.63V1320.6zM368.75 1320.6V1305.43H370.68V1320.6zM370.98 1320.6V1300.38H373.09V1320.6zM373.21 1320.6V1305.43H375.32V1320.6zM375.44 1320.6V1305.43H377.37V1320.6zM377.67 1320.6V1305.43H379.78V1320.6zM379.90 1320.6V1305.43H382.01V1320.6zM382.13 1320.6V1305.43H384.06V1320.6zM384.36 1320.6V1305.43H386.47V1320.6zM386.59 1320.6V1305.43H388.70V1320.6zM388.83 1320.6V1300.38H390.76V1320.6zM391.06 1320.6V1300.38H393.17V1320.6zM393.29 1320.6V1305.43H395.40V1320.6zM395.52 1320.6V1305.43H397.45V1320.6zM397.75 1320.6V1305.43H399.86V1320.6zM399.98 1320.6V1305.43H402.09V1320.6zM402.21 1320.6V1305.43H404.14V1320.6zM404.44 1320.6V1305.43H406.55V1320.6zM406.67 1320.6V1305.43H408.78V1320.6zM408.90 1320.6V1300.38H410.83V1320.6zM411.13 1320.6V1300.38H413.24V1320.6zM413.36 1320.6V1300.38H415.47V1320.6zM415.59 1320.6V1300.38H417.52V1320.6zM417.82 1320.6V1300.38H419.93V1320.6zM420.05 1320.6V1300.38H422.16V1320.6zM422.28 1320.6V1300.38H424.21V1320.6zM424.51 1320.6V1300.38H426.62V1320.6zM426.74 1320.6V1300.38H428.86V1320.6zM428.98 1320.6V1295.32H430.91V1320.6zM431.21 1320.6V1300.38H433.32V1320.6zM433.44 1320.6V1295.32H435.55V1320.6zM435.67 1320.6V1300.38H437.60V1320.6zM437.90 1320.6V1300.38H440.01V1320.6zM440.13 1320.6V1300.38H442.24V1320.6zM442.36 1320.6V1300.38H444.29V1320.6zM444.59 1320.6V1300.38H446.70V1320.6zM446.82 1320.6V1295.32H448.93V1320.6zM449.05 1320.6V1300.38H450.98V1320.6zM451.28 1320.6V1300.38H453.39V1320.6zM453.51 1320.6V1300.38H455.62V1320.6zM455.74 1320.6V1300.38H457.67V1320.6zM457.97 1320.6V1300.38H460.08V1320.6zM460.20 1320.6V1300.38H462.31V1320.6zM462.43 1320.6V1300.38H464.36V1320.6zM464.66 1320.6V1295.32H466.77V1320.6zM466.89 1320.6V1295.32H469.00V1320.6zM469.12 1320.6V1300.38H471.06V1320.6zM471.36 1320.6V1300.38H473.47V1320.6zM473.59 1320.6V1300.38H475.70V1320.6zM475.82 1320.6V1295.32H477.75V1320.6zM478.05 1320.6V1295.32H480.16V1320.6zM480.28 1320.6V1295.32H482.39V1320.6zM482.51 1320.6V1290.26H484.44V1320.6zM484.74 1320.6V1290.26H486.85V1320.6zM486.97 1320.6V1295.32H489.08V1320.6zM489.20 1320.6V1295.32H491.13V1320.6zM491.43 1320.6V1290.26H493.54V1320.6zM493.66 1320.6V1295.32H495.77V1320.6zM495.89 1320.6V1295.32H497.82V1320.6zM498.12 1320.6V1290.26H500.23V1320.6zM500.35 1320.6V1290.26H502.46V1320.6zM502.58 1320.6V1285.21H504.51V1320.6zM504.81 1320.6V1295.32H506.92V1320.6zM507.04 1320.6V1295.32H509.16V1320.6zM509.28 1320.6V1295.32H511.21V1320.6zM511.51 1320.6V1295.32H513.62V1320.6zM513.74 1320.6V1290.26H515.85V1320.6zM515.97 1320.6V1290.26H517.90V1320.6zM518.20 1320.6V1295.32H520.31V1320.6zM520.43 1320.6V1290.26H522.54V1320.6zM522.66 1320.6V1295.32H524.59V1320.6zM524.89 1320.6V1295.32H527.00V1320.6zM527.12 1320.6V1295.32H529.23V1320.6zM529.35 1320.6V1295.32H531.28V1320.6zM531.58 1320.6V1295.32H533.69V1320.6zM533.81 1320.6V1295.32H535.92V1320.6zM536.04 1320.6V1295.32H537.97V1320.6zM538.27 1320.6V1290.26H540.38V1320.6zM540.50 1320.6V1290.26H542.61V1320.6zM542.73 1320.6V1270.04H544.66V1320.6zM544.96 1320.6V1270.04H547.07V1320.6zM547.19 1320.6V1275.10H549.31V1320.6zM549.42 1320.6V1275.10H551.36V1320.6zM551.66 1320.6V1275.10H553.77V1320.6zM553.89 1320.6V1270.04H556.00V1320.6zM556.12 1320.6V1270.04H558.05V1320.6zM558.35 1320.6V1275.10H560.46V1320.6zM560.58 1320.6V1270.04H562.69V1320.6zM562.81 1320.6V1270.04H564.74V1320.6zM565.04 1320.6V1275.10H567.15V1320.6zM567.27 1320.6V1275.10H569.38V1320.6zM716.72 1320.6V1280.15H718.65V1320.6zM718.95 1320.6V1280.15H721.06V1320.6zM721.18 1320.6V1285.21H723.29V1320.6zM723.41 1320.6V1285.21H725.34V1320.6zM725.64 1320.6V1280.15H727.75V1320.6zM727.87 1320.6V1280.15H729.98V1320.6zM730.10 1320.6V1280.15H732.03V1320.6zM732.33 1320.6V1285.21H734.44V1320.6zM734.56 1320.6V1290.26H736.67V1320.6zM736.79 1320.6V1285.21H738.72V1320.6zM739.02 1320.6V1290.26H741.13V1320.6zM741.25 1320.6V1285.21H743.36V1320.6zM743.48 1320.6V1290.26H745.41V1320.6zM745.71 1320.6V1285.21H747.82V1320.6zM747.94 1320.6V1280.15H750.06V1320.6zM750.18 1320.6V1275.10H752.11V1320.6zM752.41 1320.6V1275.10H754.52V1320.6zM754.64 1320.6V1285.21H756.75V1320.6zM756.87 1320.6V1285.21H758.80V1320.6zM759.10 1320.6V1280.15H761.21V1320.6zM761.33 1320.6V1280.15H763.44V1320.6zM763.56 1320.6V1285.21H765.49V1320.6zM765.79 1320.6V1280.15H767.90V1320.6zM768.02 1320.6V1280.15H770.13V1320.6zM770.25 1320.6V1275.10H772.18V1320.6zM772.48 1320.6V1285.21H774.59V1320.6zM774.71 1320.6V1285.21H776.82V1320.6zM776.94 1320.6V1290.26H778.87V1320.6zM779.17 1320.6V1290.26H781.28V1320.6zM781.40 1320.6V1290.26H783.51V1320.6zM783.63 1320.6V1285.21H785.56V1320.6zM785.86 1320.6V1285.21H787.97V1320.6zM788.09 1320.6V1275.10H790.21V1320.6zM790.33 1320.6V1275.10H792.26V1320.6zM792.56 1320.6V1280.15H794.67V1320.6zM794.79 1320.6V1280.15H796.90V1320.6zM797.02 1320.6V1280.15H798.95V1320.6zM799.25 1320.6V1280.15H801.36V1320.6zM801.48 1320.6V1280.15H803.59V1320.6zM803.71 1320.6V1280.15H805.64V1320.6zM805.94 1320.6V1280.15H808.05V1320.6zM808.17 1320.6V1280.15H810.28V1320.6zM810.40 1320.6V1285.21H812.33V1320.6zM812.63 1320.6V1285.21H814.74V1320.6zM814.86 1320.6V1290.26H816.97V1320.6zM817.09 1320.6V1285.21H819.02V1320.6zM819.32 1320.6V1280.15H821.43V1320.6zM821.55 1320.6V1280.15H823.66V1320.6zM823.78 1320.6V1280.15H825.71V1320.6zM826.01 1320.6V1280.15H828.12V1320.6zM828.24 1320.6V1275.10H830.36V1320.6zM830.48 1320.6V1275.10H832.41V1320.6zM832.71 1320.6V1280.15H834.82V1320.6zM834.94 1320.6V1285.21H837.05V1320.6zM837.17 1320.6V1285.21H839.10V1320.6zM839.40 1320.6V1285.21H841.51V1320.6zM841.63 1320.6V1290.26H843.74V1320.6zM843.86 1320.6V1285.21H845.79V1320.6zM846.09 1320.6V1280.15H848.20V1320.6zM848.32 1320.6V1275.10H850.43V1320.6zM850.55 1320.6V1280.15H852.48V1320.6zM852.78 1320.6V1285.21H854.89V1320.6zM855.01 1320.6V1285.21H857.12V1320.6zM857.24 1320.6V1280.15H859.17V1320.6zM859.47 1320.6V1285.21H861.58V1320.6zM861.70 1320.6V1285.21H863.81V1320.6zM863.93 1320.6V1259.93H865.86V1320.6zM866.16 1320.6V1259.93H868.27V1320.6zM868.39 1320.6V1254.87H870.51V1320.6zM870.62 1320.6V1249.82H872.56V1320.6zM872.86 1320.6V1259.93H874.97V1320.6zM875.09 1320.6V1259.93H877.20V1320.6zM877.32 1320.6V1259.93H879.25V1320.6zM879.55 1320.6V1264.98H881.66V1320.6zM881.78 1320.6V1270.04H883.89V1320.6zM884.01 1320.6V1270.04H885.94V1320.6zM886.24 1320.6V1270.04H888.35V1320.6zM888.47 1320.6V1270.04H890.58V1320.6zM1037.92 1320.6V1259.93H1039.85V1320.6zM1040.15 1320.6V1244.76H1042.26V1320.6zM1042.38 1320.6V1259.93H1044.49V1320.6zM1044.61 1320.6V1244.76H1046.54V1320.6zM1046.84 1320.6V1295.32H1048.95V1320.6zM1049.07 1320.6V1295.32H1051.18V1320.6zM1051.30 1320.6V1285.21H1053.23V1320.6zM1053.53 1320.6V1290.26H1055.64V1320.6zM1055.76 1320.6V1290.26H1057.87V1320.6zM1057.99 1320.6V1290.26H1059.92V1320.6zM1060.22 1320.6V1285.21H1062.33V1320.6zM1062.45 1320.6V1290.26H1064.56V1320.6zM1064.68 1320.6V1280.15H1066.61V1320.6zM1066.91 1320.6V1285.21H1069.02V1320.6zM1069.14 1320.6V1285.21H1071.26V1320.6zM1071.38 1320.6V1285.21H1073.31V1320.6zM1073.61 1320.6V1285.21H1075.72V1320.6zM1075.84 1320.6V1285.21H1077.95V1320.6zM1078.07 1320.6V1285.21H1080.00V1320.6zM1080.30 1320.6V1285.21H1082.41V1320.6zM1082.53 1320.6V1290.26H1084.64V1320.6zM1084.76 1320.6V1290.26H1086.69V1320.6zM1086.99 1320.6V1290.26H1089.10V1320.6zM1089.22 1320.6V1290.26H1091.33V1320.6zM1091.45 1320.6V1285.21H1093.38V1320.6zM1093.68 1320.6V1285.21H1095.79V1320.6zM1095.91 1320.6V1290.26H1098.02V1320.6zM1098.14 1320.6V1290.26H1100.07V1320.6zM1100.37 1320.6V1290.26H1102.48V1320.6zM1102.60 1320.6V1290.26H1104.71V1320.6zM1104.83 1320.6V1285.21H1106.76V1320.6zM1107.06 1320.6V1290.26H1109.17V1320.6zM1109.29 1320.6V1290.26H1111.41V1320.6zM1111.53 1320.6V1290.26H1113.46V1320.6zM1113.76 1320.6V1290.26H1115.87V1320.6zM1115.99 1320.6V1285.21H1118.10V1320.6zM1118.22 1320.6V1290.26H1120.15V1320.6zM1120.45 1320.6V1290.26H1122.56V1320.6zM1122.68 1320.6V1290.26H1124.79V1320.6zM1124.91 1320.6V1290.26H1126.84V1320.6zM1127.14 1320.6V1285.21H1129.25V1320.6zM1129.37 1320.6V1285.21H1131.48V1320.6zM1131.60 1320.6V1295.32H1133.53V1320.6zM1133.83 1320.6V1290.26H1135.94V1320.6zM1136.06 1320.6V1290.26H1138.17V1320.6zM1138.29 1320.6V1285.21H1140.22V1320.6zM1140.52 1320.6V1285.21H1142.63V1320.6zM1142.75 1320.6V1290.26H1144.86V1320.6zM1144.98 1320.6V1290.26H1146.91V1320.6zM1147.21 1320.6V1290.26H1149.32V1320.6zM1149.44 1320.6V1290.26H1151.56V1320.6zM1151.68 1320.6V1295.32H1153.61V1320.6zM1153.91 1320.6V1295.32H1156.02V1320.6zM1156.14 1320.6V1295.32H1158.25V1320.6zM1158.37 1320.6V1295.32H1160.30V1320.6zM1160.60 1320.6V1290.26H1162.71V1320.6zM1162.83 1320.6V1290.26H1164.94V1320.6zM1165.06 1320.6V1295.32H1166.99V1320.6zM1167.29 1320.6V1295.32H1169.40V1320.6zM1169.52 1320.6V1295.32H1171.63V1320.6zM1171.75 1320.6V1295.32H1173.68V1320.6zM1173.98 1320.6V1290.26H1176.09V1320.6zM1176.21 1320.6V1295.32H1178.32V1320.6zM1178.44 1320.6V1295.32H1180.37V1320.6zM1180.67 1320.6V1295.32H1182.78V1320.6zM1182.90 1320.6V1295.32H1185.01V1320.6zM1185.13 1320.6V1259.93H1187.06V1320.6zM1187.36 1320.6V1270.04H1189.47V1320.6zM1189.59 1320.6V1270.04H1191.71V1320.6zM1191.83 1320.6V1270.04H1193.76V1320.6zM1194.06 1320.6V1270.04H1196.17V1320.6zM1196.29 1320.6V1270.04H1198.40V1320.6zM1198.52 1320.6V1264.98H1200.45V1320.6zM1200.75 1320.6V1270.04H1202.86V1320.6zM1202.98 1320.6V1163.86H1205.09V1320.6zM1205.21 1320.6V1209.37H1207.14V1320.6zM1207.44 1320.6V1204.31H1209.55V1320.6zM1209.67 1320.6V1128.47H1211.78V1320.6zM1359.12 1320.6V1199.26H1361.05V1320.6zM1361.35 1320.6V1264.98H1363.46V1320.6zM1363.58 1320.6V1264.98H1365.69V1320.6zM1365.81 1320.6V1275.10H1367.74V1320.6zM1368.04 1320.6V1280.15H1370.15V1320.6zM1370.27 1320.6V1244.76H1372.38V1320.6zM1372.50 1320.6V1275.10H1374.43V1320.6zM1374.73 1320.6V1259.93H1376.84V1320.6zM1376.96 1320.6V1264.98H1379.07V1320.6zM1379.19 1320.6V1290.26H1381.12V1320.6zM1381.42 1320.6V1295.32H1383.53V1320.6zM1383.65 1320.6V1295.32H1385.76V1320.6zM1385.88 1320.6V1295.32H1387.81V1320.6zM1388.11 1320.6V1290.26H1390.22V1320.6zM1390.34 1320.6V1290.26H1392.46V1320.6zM1392.58 1320.6V1295.32H1394.51V1320.6zM1394.81 1320.6V1295.32H1396.92V1320.6zM1397.04 1320.6V1295.32H1399.15V1320.6zM1399.27 1320.6V1295.32H1401.20V1320.6zM1401.50 1320.6V1285.21H1403.61V1320.6zM1403.73 1320.6V1295.32H1405.84V1320.6zM1405.96 1320.6V1295.32H1407.89V1320.6zM1408.19 1320.6V1295.32H1410.30V1320.6zM1410.42 1320.6V1295.32H1412.53V1320.6zM1412.65 1320.6V1290.26H1414.58V1320.6zM1414.88 1320.6V1290.26H1416.99V1320.6zM1417.11 1320.6V1295.32H1419.22V1320.6zM1419.34 1320.6V1295.32H1421.27V1320.6zM1421.57 1320.6V1295.32H1423.68V1320.6zM1423.80 1320.6V1290.26H1425.91V1320.6zM1426.03 1320.6V1290.26H1427.96V1320.6zM1428.26 1320.6V1295.32H1430.37V1320.6zM1430.49 1320.6V1295.32H1432.61V1320.6zM1432.73 1320.6V1295.32H1434.66V1320.6zM1434.96 1320.6V1290.26H1437.07V1320.6zM1437.19 1320.6V1290.26H1439.30V1320.6zM1439.42 1320.6V1295.32H1441.35V1320.6zM1441.65 1320.6V1295.32H1443.76V1320.6zM1443.88 1320.6V1295.32H1445.99V1320.6zM1446.11 1320.6V1295.32H1448.04V1320.6zM1448.34 1320.6V1285.21H1450.45V1320.6zM1450.57 1320.6V1295.32H1452.68V1320.6zM1452.80 1320.6V1295.32H1454.73V1320.6zM1455.03 1320.6V1290.26H1457.14V1320.6zM1457.26 1320.6V1295.32H1459.37V1320.6zM1459.49 1320.6V1285.21H1461.42V1320.6zM1461.72 1320.6V1290.26H1463.83V1320.6zM1463.95 1320.6V1300.38H1466.06V1320.6zM1466.18 1320.6V1300.38H1468.11V1320.6zM1468.41 1320.6V1300.38H1470.52V1320.6zM1470.64 1320.6V1295.32H1472.76V1320.6zM1472.88 1320.6V1295.32H1474.81V1320.6zM1475.11 1320.6V1300.38H1477.22V1320.6zM1477.34 1320.6V1300.38H1479.45V1320.6zM1479.57 1320.6V1300.38H1481.50V1320.6zM1481.80 1320.6V1295.32H1483.91V1320.6zM1484.03 1320.6V1295.32H1486.14V1320.6zM1486.26 1320.6V1300.38H1488.19V1320.6zM1488.49 1320.6V1300.38H1490.60V1320.6zM1490.72 1320.6V1300.38H1492.83V1320.6zM1492.95 1320.6V1300.38H1494.88V1320.6zM1495.18 1320.6V1295.32H1497.29V1320.6zM1497.41 1320.6V1300.38H1499.52V1320.6zM1499.64 1320.6V1300.38H1501.57V1320.6zM1501.87 1320.6V1300.38H1503.98V1320.6zM1504.10 1320.6V1300.38H1506.21V1320.6zM1506.33 1320.6V1270.04H1508.26V1320.6zM1508.56 1320.6V1280.15H1510.67V1320.6zM1510.79 1320.6V1275.10H1512.91V1320.6zM1513.03 1320.6V1280.15H1514.96V1320.6zM1515.26 1320.6V1280.15H1517.37V1320.6zM1517.49 1320.6V1275.10H1519.60V1320.6zM1519.72 1320.6V1275.10H1521.65V1320.6zM1521.95 1320.6V1280.15H1524.06V1320.6zM1524.18 1320.6V1280.15H1526.29V1320.6zM1526.41 1320.6V1280.15H1528.34V1320.6zM1528.64 1320.6V1285.21H1530.75V1320.6zM1530.87 1320.6V1280.15H1532.98V1320.6zM1680.32 1320.6V1295.32H1682.25V1320.6zM1682.55 1320.6V1295.32H1684.66V1320.6zM1684.78 1320.6V1295.32H1686.89V1320.6zM1687.01 1320.6V1280.15H1688.94V1320.6zM1689.24 1320.6V1295.32H1691.35V1320.6zM1691.47 1320.6V1285.21H1693.58V1320.6zM1693.70 1320.6V1295.32H1695.63V1320.6zM1695.93 1320.6V1290.26H1698.04V1320.6zM1698.16 1320.6V1290.26H1700.27V1320.6zM1700.39 1320.6V1290.26H1702.32V1320.6zM1702.62 1320.6V1285.21H1704.73V1320.6zM1704.85 1320.6V1290.26H1706.96V1320.6zM1707.08 1320.6V1290.26H1709.01V1320.6zM1709.31 1320.6V1290.26H1711.42V1320.6zM1711.54 1320.6V1290.26H1713.66V1320.6zM1713.78 1320.6V1290.26H1715.71V1320.6zM1716.01 1320.6V1290.26H1718.12V1320.6zM1718.24 1320.6V1290.26H1720.35V1320.6zM1720.47 1320.6V1290.26H1722.40V1320.6zM1722.70 1320.6V1290.26H1724.81V1320.6zM1724.93 1320.6V1290.26H1727.04V1320.6zM1727.16 1320.6V1290.26H1729.09V1320.6zM1729.39 1320.6V1290.26H1731.50V1320.6zM1731.62 1320.6V1290.26H1733.73V1320.6zM1733.85 1320.6V1290.26H1735.78V1320.6zM1736.08 1320.6V1290.26H1738.19V1320.6zM1738.31 1320.6V1290.26H1740.42V1320.6zM1740.54 1320.6V1290.26H1742.47V1320.6zM1742.77 1320.6V1290.26H1744.88V1320.6zM1745.00 1320.6V1290.26H1747.11V1320.6zM1747.23 1320.6V1290.26H1749.16V1320.6zM1749.46 1320.6V1290.26H1751.57V1320.6zM1751.69 1320.6V1290.26H1753.81V1320.6zM1753.92 1320.6V1290.26H1755.86V1320.6zM1756.16 1320.6V1290.26H1758.27V1320.6zM1758.39 1320.6V1290.26H1760.50V1320.6zM1760.62 1320.6V1290.26H1762.55V1320.6zM1762.85 1320.6V1290.26H1764.96V1320.6zM1765.08 1320.6V1290.26H1767.19V1320.6zM1767.31 1320.6V1290.26H1769.24V1320.6zM1769.54 1320.6V1295.32H1771.65V1320.6zM1771.77 1320.6V1295.32H1773.88V1320.6zM1774.00 1320.6V1295.32H1775.93V1320.6zM1776.23 1320.6V1295.32H1778.34V1320.6zM1778.46 1320.6V1295.32H1780.57V1320.6zM1780.69 1320.6V1295.32H1782.62V1320.6zM1782.92 1320.6V1295.32H1785.03V1320.6zM1785.15 1320.6V1295.32H1787.26V1320.6zM1787.38 1320.6V1295.32H1789.31V1320.6zM1789.61 1320.6V1295.32H1791.72V1320.6zM1791.84 1320.6V1290.26H1793.96V1320.6zM1794.08 1320.6V1295.32H1796.01V1320.6zM1796.31 1320.6V1300.38H1798.42V1320.6zM1798.54 1320.6V1295.32H1800.65V1320.6zM1800.77 1320.6V1295.32H1802.70V1320.6zM1803.00 1320.6V1295.32H1805.11V1320.6zM1805.23 1320.6V1295.32H1807.34V1320.6zM1807.46 1320.6V1295.32H1809.39V1320.6zM1809.69 1320.6V1295.32H1811.80V1320.6zM1811.92 1320.6V1295.32H1814.03V1320.6zM1814.15 1320.6V1295.32H1816.08V1320.6zM1816.38 1320.6V1295.32H1818.49V1320.6zM1818.61 1320.6V1295.32H1820.72V1320.6zM1820.84 1320.6V1295.32H1822.77V1320.6zM1823.07 1320.6V1295.32H1825.18V1320.6zM1825.30 1320.6V1295.32H1827.41V1320.6zM1827.53 1320.6V1264.98H1829.46V1320.6zM1829.76 1320.6V1264.98H1831.87V1320.6zM1831.99 1320.6V1270.04H1834.11V1320.6zM1834.23 1320.6V1270.04H1836.16V1320.6zM1836.46 1320.6V1275.10H1838.57V1320.6zM1838.69 1320.6V1275.10H1840.80V1320.6zM1840.92 1320.6V1275.10H1842.85V1320.6zM1843.15 1320.6V1275.10H1845.26V1320.6zM1845.38 1320.6V1275.10H1847.49V1320.6zM1847.61 1320.6V1280.15H1849.54V1320.6zM1849.84 1320.6V1280.15H1851.95V1320.6zM1852.07 1320.6V1239.70H1854.18V1320.6zM2001.52 1320.6V1290.26H2003.45V1320.6zM2003.75 1320.6V1290.26H2005.86V1320.6zM2005.98 1320.6V1295.32H2008.09V1320.6zM2008.21 1320.6V1295.32H2010.14V1320.6zM2010.44 1320.6V1290.26H2012.55V1320.6zM2012.67 1320.6V1295.32H2014.78V1320.6zM2014.90 1320.6V1295.32H2016.83V1320.6zM2017.13 1320.6V1300.38H2019.24V1320.6zM2019.36 1320.6V1300.38H2021.47V1320.6zM2021.59 1320.6V1295.32H2023.52V1320.6zM2023.82 1320.6V1295.32H2025.93V1320.6zM2026.05 1320.6V1295.32H2028.16V1320.6zM2028.28 1320.6V1300.38H2030.21V1320.6zM2030.51 1320.6V1300.38H2032.62V1320.6zM2032.74 1320.6V1300.38H2034.86V1320.6zM2034.98 1320.6V1300.38H2036.91V1320.6zM2037.21 1320.6V1300.38H2039.32V1320.6zM2039.44 1320.6V1295.32H2041.55V1320.6zM2041.67 1320.6V1300.38H2043.60V1320.6zM2043.90 1320.6V1290.26H2046.01V1320.6zM2046.13 1320.6V1295.32H2048.24V1320.6zM2048.36 1320.6V1300.38H2050.29V1320.6zM2050.59 1320.6V1295.32H2052.70V1320.6zM2052.82 1320.6V1295.32H2054.93V1320.6zM2055.05 1320.6V1295.32H2056.98V1320.6zM2057.28 1320.6V1300.38H2059.39V1320.6zM2059.51 1320.6V1300.38H2061.62V1320.6zM2061.74 1320.6V1300.38H2063.67V1320.6zM2063.97 1320.6V1300.38H2066.08V1320.6zM2066.20 1320.6V1295.32H2068.31V1320.6zM2068.43 1320.6V1295.32H2070.36V1320.6zM2070.66 1320.6V1300.38H2072.77V1320.6zM2072.89 1320.6V1300.38H2075.01V1320.6zM2075.12 1320.6V1300.38H2077.06V1320.6zM2077.36 1320.6V1300.38H2079.47V1320.6zM2079.59 1320.6V1300.38H2081.70V1320.6zM2081.82 1320.6V1300.38H2083.75V1320.6zM2084.05 1320.6V1300.38H2086.16V1320.6zM2086.28 1320.6V1300.38H2088.39V1320.6zM2088.51 1320.6V1295.32H2090.44V1320.6zM2090.74 1320.6V1295.32H2092.85V1320.6zM2092.97 1320.6V1300.38H2095.08V1320.6zM2095.20 1320.6V1300.38H2097.13V1320.6zM2097.43 1320.6V1300.38H2099.54V1320.6zM2099.66 1320.6V1295.32H2101.77V1320.6zM2101.89 1320.6V1295.32H2103.82V1320.6zM2104.12 1320.6V1300.38H2106.23V1320.6zM2106.35 1320.6V1300.38H2108.46V1320.6zM2108.58 1320.6V1295.32H2110.51V1320.6zM2110.81 1320.6V1295.32H2112.92V1320.6zM2113.04 1320.6V1300.38H2115.16V1320.6zM2115.28 1320.6V1300.38H2117.21V1320.6zM2117.51 1320.6V1300.38H2119.62V1320.6zM2119.74 1320.6V1300.38H2121.85V1320.6zM2121.97 1320.6V1300.38H2123.90V1320.6zM2124.20 1320.6V1295.32H2126.31V1320.6zM2126.43 1320.6V1300.38H2128.54V1320.6zM2128.66 1320.6V1300.38H2130.59V1320.6zM2130.89 1320.6V1300.38H2133.00V1320.6zM2133.12 1320.6V1290.26H2135.23V1320.6zM2135.35 1320.6V1300.38H2137.28V1320.6zM2137.58 1320.6V1300.38H2139.69V1320.6zM2139.81 1320.6V1300.38H2141.92V1320.6zM2142.04 1320.6V1300.38H2143.97V1320.6zM2144.27 1320.6V1300.38H2146.38V1320.6zM2146.50 1320.6V1300.38H2148.61V1320.6zM2148.73 1320.6V1300.38H2150.66V1320.6zM2150.96 1320.6V1300.38H2153.07V1320.6zM2153.19 1320.6V1290.26H2155.30V1320.6zM2155.43 1320.6V1295.32H2157.36V1320.6zM2157.66 1320.6V1300.38H2159.77V1320.6zM2159.89 1320.6V1300.38H2162.00V1320.6zM2162.12 1320.6V1300.38H2164.05V1320.6zM2164.35 1320.6V1300.38H2166.46V1320.6zM2166.58 1320.6V1300.38H2168.69V1320.6zM2168.81 1320.6V1295.32H2170.74V1320.6zM2171.04 1320.6V1300.38H2173.15V1320.6zM2173.27 1320.6V1290.26H2175.38V1320.6zM2175.50 1320.6V1295.32H2177.43V1320.6zM2177.73 1320.6V1300.38H2179.84V1320.6zM2179.96 1320.6V1295.32H2182.07V1320.6zM2182.19 1320.6V1295.32H2184.12V1320.6zM2184.42 1320.6V1300.38H2186.53V1320.6zM2186.65 1320.6V1300.38H2188.76V1320.6zM2188.88 1320.6V1300.38H2190.81V1320.6zM2191.11 1320.6V1300.38H2193.22V1320.6zM2193.34 1320.6V1300.38H2195.45V1320.6zM2195.57 1320.6V1290.26H2197.51V1320.6zM2197.81 1320.6V1300.38H2199.92V1320.6zM2200.04 1320.6V1300.38H2202.15V1320.6zM2202.27 1320.6V1300.38H2204.20V1320.6zM2204.50 1320.6V1300.38H2206.61V1320.6zM2206.73 1320.6V1300.38H2208.84V1320.6zM2208.96 1320.6V1300.38H2210.89V1320.6zM2211.19 1320.6V1300.38H2213.30V1320.6zM2213.42 1320.6V1300.38H2215.53V1320.6zM2215.65 1320.6V1295.32H2217.58V1320.6zM2217.88 1320.6V1305.43H2219.99V1320.6zM2220.11 1320.6V1305.43H2222.22V1320.6zM2222.34 1320.6V1305.43H2224.27V1320.6zM2224.57 1320.6V1305.43H2226.68V1320.6zM2226.80 1320.6V1305.43H2228.91V1320.6zM2229.03 1320.6V1305.43H2230.96V1320.6zM2231.26 1320.6V1305.43H2233.37V1320.6zM2233.49 1320.6V1305.43H2235.61V1320.6zM2235.72 1320.6V1295.32H2237.66V1320.6zM2237.96 1320.6V1305.43H2240.07V1320.6zM2240.19 1320.6V1305.43H2242.30V1320.6zM2242.42 1320.6V1305.43H2244.35V1320.6zM2244.65 1320.6V1305.43H2246.76V1320.6zM2246.88 1320.6V1300.38H2248.99V1320.6zM2249.11 1320.6V1305.43H2251.04V1320.6zM2251.34 1320.6V1300.38H2253.45V1320.6zM2253.57 1320.6V1305.43H2255.68V1320.6zM2255.80 1320.6V1305.43H2257.73V1320.6zM2258.03 1320.6V1300.38H2260.14V1320.6zM2260.26 1320.6V1305.43H2262.37V1320.6zM2262.49 1320.6V1305.43H2264.42V1320.6zM2264.72 1320.6V1300.38H2266.83V1320.6zM2266.95 1320.6V1305.43H2269.06V1320.6zM2269.18 1320.6V1305.43H2271.11V1320.6zM2271.41 1320.6V1305.43H2273.52V1320.6zM2273.64 1320.6V1305.43H2275.76V1320.6zM2275.88 1320.6V1305.43H2277.81V1320.6zM2278.11 1320.6V1300.38H2280.22V1320.6zM2280.34 1320.6V1300.38H2282.45V1320.6zM2282.57 1320.6V1305.43H2284.50V1320.6zM2284.80 1320.6V1305.43H2286.91V1320.6zM2287.03 1320.6V1305.43H2289.14V1320.6zM2289.26 1320.6V1305.43H2291.19V1320.6zM2291.49 1320.6V1305.43H2293.60V1320.6zM2293.72 1320.6V1305.43H2295.83V1320.6zM2295.95 1320.6V1305.43H2297.88V1320.6zM2298.18 1320.6V1305.43H2300.29V1320.6zM2300.41 1320.6V1305.43H2302.52V1320.6zM2302.64 1320.6V1300.38H2304.57V1320.6zM2304.87 1320.6V1305.43H2306.98V1320.6zM2307.10 1320.6V1305.43H2309.21V1320.6zM2309.33 1320.6V1310.49H2311.26V1320.6z" fill="#a0ecc4"/>
<path d="M569.50 1320.6V1275.10H571.79V1320.6zM571.73 1320.6V1275.10H574.02V1320.6zM573.96 1320.6V1275.10H576.25V1320.6zM576.19 1320.6V1280.15H578.48V1320.6zM578.42 1320.6V1275.10H580.71V1320.6zM580.65 1320.6V1280.15H582.94V1320.6zM582.88 1320.6V1153.75H585.17V1320.6zM585.11 1320.6V1153.75H587.40V1320.6zM587.34 1320.6V1254.87H589.63V1320.6zM589.58 1320.6V1264.98H591.87V1320.6zM591.81 1320.6V1259.93H594.10V1320.6zM594.04 1320.6V1184.09H596.33V1320.6zM596.27 1320.6V1082.97H598.56V1320.6zM598.50 1320.6V1224.54H600.79V1320.6zM600.73 1320.6V1214.42H603.02V1320.6zM602.96 1320.6V1209.37H605.25V1320.6zM605.19 1320.6V1184.09H607.48V1320.6zM607.42 1320.6V1093.08H609.71V1320.6zM609.65 1320.6V1163.86H611.94V1320.6zM611.88 1320.6V1088.02H614.17V1320.6zM614.11 1320.6V1168.92H616.40V1320.6zM616.34 1320.6V1254.87H618.63V1320.6zM618.57 1320.6V1158.81H620.86V1320.6zM620.80 1320.6V1259.93H623.09V1320.6zM623.03 1320.6V1264.98H625.32V1320.6zM625.26 1320.6V1259.93H627.55V1320.6zM627.49 1320.6V1270.04H629.79V1320.6zM629.73 1320.6V1270.04H632.02V1320.6zM631.96 1320.6V1163.86H634.25V1320.6zM634.19 1320.6V1214.42H636.48V1320.6zM636.42 1320.6V1259.93H638.71V1320.6zM638.65 1320.6V1239.70H640.94V1320.6zM640.88 1320.6V1173.98H643.17V1320.6zM643.11 1320.6V1133.53H645.40V1320.6zM645.34 1320.6V1219.48H647.63V1320.6zM647.57 1320.6V1179.03H649.86V1320.6zM649.80 1320.6V1173.98H652.09V1320.6zM652.03 1320.6V1264.98H654.32V1320.6zM654.26 1320.6V1264.98H656.55V1320.6zM656.49 1320.6V1264.98H658.78V1320.6zM658.72 1320.6V1264.98H661.01V1320.6zM660.95 1320.6V1259.93H663.24V1320.6zM663.18 1320.6V1168.92H665.47V1320.6zM665.41 1320.6V1012.18H667.70V1320.6zM667.64 1320.6V1052.63H669.93V1320.6zM669.88 1320.6V1042.52H672.17V1320.6zM672.11 1320.6V981.85H674.40V1320.6zM674.34 1320.6V1123.42H676.63V1320.6zM676.57 1320.6V1194.20H678.86V1320.6zM678.80 1320.6V1158.81H681.09V1320.6zM681.03 1320.6V1209.37H683.32V1320.6zM683.26 1320.6V1270.04H685.55V1320.6zM685.49 1320.6V1184.09H687.78V1320.6zM687.72 1320.6V1204.31H690.01V1320.6zM689.95 1320.6V1234.65H692.24V1320.6zM692.18 1320.6V1194.20H694.47V1320.6zM694.41 1320.6V1254.87H696.70V1320.6zM696.64 1320.6V1244.76H698.93V1320.6zM698.87 1320.6V1224.54H701.16V1320.6zM701.10 1320.6V1270.04H703.39V1320.6zM703.33 1320.6V1275.10H705.62V1320.6zM705.56 1320.6V1280.15H707.85V1320.6zM707.79 1320.6V1280.15H710.09V1320.6zM710.02 1320.6V1280.15H712.32V1320.6zM712.26 1320.6V1275.10H714.55V1320.6zM714.49 1320.6V1275.10H716.78V1320.6zM890.70 1320.6V1264.98H892.99V1320.6zM892.93 1320.6V1264.98H895.22V1320.6zM895.16 1320.6V1270.04H897.45V1320.6zM897.39 1320.6V1264.98H899.68V1320.6zM899.62 1320.6V1264.98H901.91V1320.6zM901.85 1320.6V1275.10H904.14V1320.6zM904.08 1320.6V1275.10H906.37V1320.6zM906.31 1320.6V1249.82H908.60V1320.6zM908.54 1320.6V1224.54H910.84V1320.6zM910.77 1320.6V1138.58H913.07V1320.6zM913.01 1320.6V1128.47H915.30V1320.6zM915.24 1320.6V1108.25H917.53V1320.6zM917.47 1320.6V1259.93H919.76V1320.6zM919.70 1320.6V1264.98H921.99V1320.6zM921.93 1320.6V1275.10H924.22V1320.6zM924.16 1320.6V1143.64H926.45V1320.6zM926.39 1320.6V1259.93H928.68V1320.6zM928.62 1320.6V1254.87H930.91V1320.6zM930.85 1320.6V1128.47H933.14V1320.6zM933.08 1320.6V1270.04H935.37V1320.6zM935.31 1320.6V1229.59H937.60V1320.6zM937.54 1320.6V1088.02H939.83V1320.6zM939.77 1320.6V1229.59H942.06V1320.6zM942.00 1320.6V1194.20H944.29V1320.6zM944.23 1320.6V1209.37H946.52V1320.6zM946.46 1320.6V1103.19H948.75V1320.6zM948.69 1320.6V1098.14H950.99V1320.6zM950.93 1320.6V1254.87H953.22V1320.6zM953.16 1320.6V1264.98H955.45V1320.6zM955.39 1320.6V1158.81H957.68V1320.6zM957.62 1320.6V1209.37H959.91V1320.6zM959.85 1320.6V1209.37H962.14V1320.6zM962.08 1320.6V1224.54H964.37V1320.6zM964.31 1320.6V1224.54H966.60V1320.6zM966.54 1320.6V1259.93H968.83V1320.6zM968.77 1320.6V1270.04H971.06V1320.6zM971.00 1320.6V1264.98H973.29V1320.6zM973.23 1320.6V1259.93H975.52V1320.6zM975.46 1320.6V1254.87H977.75V1320.6zM977.69 1320.6V1219.48H979.98V1320.6zM979.92 1320.6V1264.98H982.21V1320.6zM982.15 1320.6V1264.98H984.44V1320.6zM984.38 1320.6V1194.20H986.67V1320.6zM986.61 1320.6V1022.30H988.90V1320.6zM988.84 1320.6V1113.30H991.13V1320.6zM991.08 1320.6V1123.42H993.37V1320.6zM993.31 1320.6V1184.09H995.60V1320.6zM995.54 1320.6V1143.64H997.83V1320.6zM997.77 1320.6V1254.87H1000.06V1320.6zM1000.00 1320.6V1204.31H1002.29V1320.6zM1002.23 1320.6V1239.70H1004.52V1320.6zM1004.46 1320.6V1229.59H1006.75V1320.6zM1006.69 1320.6V1194.20H1008.98V1320.6zM1008.92 1320.6V1179.03H1011.21V1320.6zM1011.15 1320.6V1168.92H1013.44V1320.6zM1013.38 1320.6V1199.26H1015.67V1320.6zM1015.61 1320.6V1214.42H1017.90V1320.6zM1017.84 1320.6V1118.36H1020.13V1320.6zM1020.07 1320.6V1168.92H1022.36V1320.6zM1022.30 1320.6V1229.59H1024.59V1320.6zM1024.53 1320.6V1234.65H1026.82V1320.6zM1026.76 1320.6V1224.54H1029.05V1320.6zM1028.99 1320.6V1239.70H1031.29V1320.6zM1031.22 1320.6V1219.48H1033.52V1320.6zM1033.46 1320.6V1234.65H1035.75V1320.6zM1035.69 1320.6V1219.48H1037.98V1320.6zM1211.90 1320.6V1012.18H1214.19V1320.6zM1214.13 1320.6V991.96H1216.42V1320.6zM1216.36 1320.6V1002.07H1218.65V1320.6zM1218.59 1320.6V1022.30H1220.88V1320.6zM1220.82 1320.6V1108.25H1223.11V1320.6zM1223.05 1320.6V1133.53H1225.34V1320.6zM1225.28 1320.6V906.01H1227.57V1320.6zM1227.51 1320.6V1224.54H1229.80V1320.6zM1229.74 1320.6V1168.92H1232.04V1320.6zM1231.98 1320.6V1022.30H1234.27V1320.6zM1234.21 1320.6V991.96H1236.50V1320.6zM1236.44 1320.6V1002.07H1238.73V1320.6zM1238.67 1320.6V1062.74H1240.96V1320.6zM1240.90 1320.6V1047.58H1243.19V1320.6zM1243.13 1320.6V1027.35H1245.42V1320.6zM1245.36 1320.6V911.06H1247.65V1320.6zM1247.59 1320.6V865.56H1249.88V1320.6zM1249.82 1320.6V885.78H1252.11V1320.6zM1252.05 1320.6V1017.24H1254.34V1320.6zM1254.28 1320.6V1082.97H1256.57V1320.6zM1256.51 1320.6V956.57H1258.80V1320.6zM1258.74 1320.6V1012.18H1261.03V1320.6zM1260.97 1320.6V1244.76H1263.26V1320.6zM1263.20 1320.6V956.57H1265.49V1320.6zM1265.43 1320.6V936.34H1267.72V1320.6zM1267.66 1320.6V946.46H1269.95V1320.6zM1269.89 1320.6V976.79H1272.18V1320.6zM1272.12 1320.6V951.51H1274.42V1320.6zM1274.36 1320.6V1108.25H1276.65V1320.6zM1276.59 1320.6V1148.70H1278.88V1320.6zM1278.82 1320.6V1259.93H1281.11V1320.6zM1281.05 1320.6V1037.46H1283.34V1320.6zM1283.28 1320.6V1057.69H1285.57V1320.6zM1285.51 1320.6V991.96H1287.80V1320.6zM1287.74 1320.6V1103.19H1290.03V1320.6zM1289.97 1320.6V1209.37H1292.26V1320.6zM1292.20 1320.6V1254.87H1294.49V1320.6zM1294.43 1320.6V1194.20H1296.72V1320.6zM1296.66 1320.6V1264.98H1298.95V1320.6zM1298.89 1320.6V1254.87H1301.18V1320.6zM1301.12 1320.6V1264.98H1303.41V1320.6zM1303.35 1320.6V1047.58H1305.64V1320.6zM1305.58 1320.6V1047.58H1307.87V1320.6zM1307.81 1320.6V1158.81H1310.10V1320.6zM1310.04 1320.6V1002.07H1312.34V1320.6zM1312.28 1320.6V1138.58H1314.57V1320.6zM1314.51 1320.6V946.46H1316.80V1320.6zM1316.74 1320.6V1259.93H1319.03V1320.6zM1318.97 1320.6V1270.04H1321.26V1320.6zM1321.20 1320.6V1189.14H1323.49V1320.6zM1323.43 1320.6V1153.75H1325.72V1320.6zM1325.66 1320.6V1143.64H1327.95V1320.6zM1327.89 1320.6V1118.36H1330.18V1320.6zM1330.12 1320.6V1012.18H1332.41V1320.6zM1332.35 1320.6V1022.30H1334.64V1320.6zM1334.58 1320.6V1184.09H1336.87V1320.6zM1336.81 1320.6V1037.46H1339.10V1320.6zM1339.04 1320.6V1244.76H1341.33V1320.6zM1341.27 1320.6V1264.98H1343.56V1320.6zM1343.50 1320.6V1194.20H1345.79V1320.6zM1345.73 1320.6V1148.70H1348.02V1320.6zM1347.96 1320.6V1249.82H1350.25V1320.6zM1350.19 1320.6V1219.48H1352.49V1320.6zM1352.42 1320.6V1189.14H1354.72V1320.6zM1354.66 1320.6V1219.48H1356.95V1320.6zM1356.89 1320.6V1184.09H1359.18V1320.6zM1533.10 1320.6V1285.21H1535.39V1320.6zM1535.33 1320.6V1285.21H1537.62V1320.6zM1537.56 1320.6V1285.21H1539.85V1320.6zM1539.79 1320.6V1285.21H1542.08V1320.6zM1542.02 1320.6V1280.15H1544.31V1320.6zM1544.25 1320.6V1280.15H1546.54V1320.6zM1546.48 1320.6V1285.21H1548.77V1320.6zM1548.71 1320.6V1234.65H1551.00V1320.6zM1550.94 1320.6V1138.58H1553.24V1320.6zM1553.17 1320.6V1259.93H1555.47V1320.6zM1555.41 1320.6V906.01H1557.70V1320.6zM1557.64 1320.6V997.02H1559.93V1320.6zM1559.87 1320.6V1067.80H1562.16V1320.6zM1562.10 1320.6V1002.07H1564.39V1320.6zM1564.33 1320.6V1098.14H1566.62V1320.6zM1566.56 1320.6V1072.86H1568.85V1320.6zM1568.79 1320.6V1093.08H1571.08V1320.6zM1571.02 1320.6V1234.65H1573.31V1320.6zM1573.25 1320.6V966.68H1575.54V1320.6zM1575.48 1320.6V1088.02H1577.77V1320.6zM1577.71 1320.6V911.06H1580.00V1320.6zM1579.94 1320.6V1249.82H1582.23V1320.6zM1582.17 1320.6V1199.26H1584.46V1320.6zM1584.40 1320.6V1022.30H1586.69V1320.6zM1586.63 1320.6V1194.20H1588.92V1320.6zM1588.86 1320.6V1239.70H1591.15V1320.6zM1591.09 1320.6V1194.20H1593.38V1320.6zM1593.33 1320.6V991.96H1595.62V1320.6zM1595.56 1320.6V1077.91H1597.85V1320.6zM1597.79 1320.6V1027.35H1600.08V1320.6zM1600.02 1320.6V880.73H1602.31V1320.6zM1602.25 1320.6V1219.48H1604.54V1320.6zM1604.48 1320.6V1214.42H1606.77V1320.6zM1606.71 1320.6V1123.42H1609.00V1320.6zM1608.94 1320.6V1153.75H1611.23V1320.6zM1611.17 1320.6V1264.98H1613.46V1320.6zM1613.40 1320.6V1264.98H1615.69V1320.6zM1615.63 1320.6V1270.04H1617.92V1320.6zM1617.86 1320.6V1189.14H1620.15V1320.6zM1620.09 1320.6V1270.04H1622.38V1320.6zM1622.32 1320.6V1138.58H1624.61V1320.6zM1624.55 1320.6V1133.53H1626.84V1320.6zM1626.78 1320.6V1108.25H1629.07V1320.6zM1629.01 1320.6V1234.65H1631.30V1320.6zM1631.24 1320.6V1270.04H1633.54V1320.6zM1633.48 1320.6V1088.02H1635.77V1320.6zM1635.71 1320.6V971.74H1638.00V1320.6zM1637.94 1320.6V1179.03H1640.23V1320.6zM1640.17 1320.6V1163.86H1642.46V1320.6zM1642.40 1320.6V1209.37H1644.69V1320.6zM1644.63 1320.6V1189.14H1646.92V1320.6zM1646.86 1320.6V1189.14H1649.15V1320.6zM1649.09 1320.6V1270.04H1651.38V1320.6zM1651.32 1320.6V1270.04H1653.61V1320.6zM1653.55 1320.6V1244.76H1655.84V1320.6zM1655.78 1320.6V1244.76H1658.07V1320.6zM1658.01 1320.6V1234.65H1660.30V1320.6zM1660.24 1320.6V1128.47H1662.53V1320.6zM1662.47 1320.6V1209.37H1664.76V1320.6zM1664.70 1320.6V1118.36H1666.99V1320.6zM1666.93 1320.6V1194.20H1669.22V1320.6zM1669.16 1320.6V1194.20H1671.45V1320.6zM1671.39 1320.6V1239.70H1673.68V1320.6zM1673.62 1320.6V1254.87H1675.92V1320.6zM1675.86 1320.6V1275.10H1678.15V1320.6zM1678.09 1320.6V1290.26H1680.38V1320.6zM1854.30 1320.6V1204.31H1856.59V1320.6zM1856.53 1320.6V1199.26H1858.82V1320.6zM1858.76 1320.6V1224.54H1861.05V1320.6zM1860.99 1320.6V1229.59H1863.28V1320.6zM1863.22 1320.6V1239.70H1865.51V1320.6zM1865.45 1320.6V1007.13H1867.74V1320.6zM1867.68 1320.6V1037.46H1869.97V1320.6zM1869.91 1320.6V1259.93H1872.20V1320.6zM1872.14 1320.6V1264.98H1874.43V1320.6zM1874.38 1320.6V1254.87H1876.67V1320.6zM1876.61 1320.6V1184.09H1878.90V1320.6zM1878.84 1320.6V1189.14H1881.13V1320.6zM1881.07 1320.6V1264.98H1883.36V1320.6zM1883.30 1320.6V1002.07H1885.59V1320.6zM1885.53 1320.6V1143.64H1887.82V1320.6zM1887.76 1320.6V1108.25H1890.05V1320.6zM1889.99 1320.6V1259.93H1892.28V1320.6zM1892.22 1320.6V1254.87H1894.51V1320.6zM1894.45 1320.6V1199.26H1896.74V1320.6zM1896.68 1320.6V1199.26H1898.97V1320.6zM1898.91 1320.6V1184.09H1901.20V1320.6zM1901.14 1320.6V971.74H1903.43V1320.6zM1903.37 1320.6V1032.41H1905.66V1320.6zM1905.60 1320.6V1088.02H1907.89V1320.6zM1907.83 1320.6V1179.03H1910.12V1320.6zM1910.06 1320.6V1088.02H1912.35V1320.6zM1912.29 1320.6V1219.48H1914.59V1320.6zM1914.53 1320.6V1244.76H1916.82V1320.6zM1916.76 1320.6V1219.48H1919.05V1320.6zM1918.99 1320.6V1254.87H1921.28V1320.6zM1921.22 1320.6V1088.02H1923.51V1320.6zM1923.45 1320.6V1189.14H1925.74V1320.6zM1925.68 1320.6V946.46H1927.97V1320.6zM1927.91 1320.6V1204.31H1930.20V1320.6zM1930.14 1320.6V1204.31H1932.43V1320.6zM1932.37 1320.6V1264.98H1934.66V1320.6zM1934.60 1320.6V1270.04H1936.89V1320.6zM1936.83 1320.6V1239.70H1939.12V1320.6zM1939.06 1320.6V1259.93H1941.35V1320.6zM1941.29 1320.6V1270.04H1943.58V1320.6zM1943.52 1320.6V1270.04H1945.81V1320.6zM1945.75 1320.6V1209.37H1948.04V1320.6zM1947.98 1320.6V1047.58H1950.27V1320.6zM1950.21 1320.6V1123.42H1952.50V1320.6zM1952.44 1320.6V1254.87H1954.74V1320.6zM1954.67 1320.6V1254.87H1956.97V1320.6zM1956.91 1320.6V1173.98H1959.20V1320.6zM1959.14 1320.6V1254.87H1961.43V1320.6zM1961.37 1320.6V1259.93H1963.66V1320.6zM1963.60 1320.6V1270.04H1965.89V1320.6zM1965.83 1320.6V1264.98H1968.12V1320.6zM1968.06 1320.6V1275.10H1970.35V1320.6zM1970.29 1320.6V1310.49H1972.58V1320.6zM1972.52 1320.6V1219.48H1974.81V1320.6zM1974.75 1320.6V1285.21H1977.04V1320.6zM1976.98 1320.6V1239.70H1979.27V1320.6zM1979.21 1320.6V1259.93H1981.50V1320.6zM1981.44 1320.6V1219.48H1983.73V1320.6zM1983.67 1320.6V1239.70H1985.96V1320.6zM1985.90 1320.6V1264.98H1988.19V1320.6zM1988.13 1320.6V1295.32H1990.42V1320.6zM1990.36 1320.6V1249.82H1992.65V1320.6zM1992.59 1320.6V1219.48H1994.88V1320.6zM1994.83 1320.6V1234.65H1997.12V1320.6zM1997.06 1320.6V1264.98H1999.35V1320.6zM1999.29 1320.6V1275.10H2001.58V1320.6z" fill="#22906f"/>
<path d="M582.94 1269.89V1153.75h0.6V1269.89zM588.04 1278.32V1254.87h0.6V1278.32zM595.58 1267.46V1184.09h0.6V1267.46zM603.43 1262.79V1209.37h0.6V1262.79zM605.69 1277.77V1184.09h0.6V1277.77zM610.69 1268.39V1163.86h0.6V1268.39zM616.68 1278.95V1254.87h0.6V1278.95zM647.76 1260.33V1179.03h0.6V1260.33zM670.84 1266.09V1042.52h0.6V1266.09zM686.54 1265.97V1184.09h0.6V1265.97zM693.27 1272.35V1194.20h0.6V1272.35zM694.69 1270.81V1254.87h0.6V1270.81zM697.89 1278.96V1244.76h0.6V1278.96zM699.51 1275.14V1224.54h0.6V1275.14zM907.10 1275.43V1249.82h0.6V1275.43zM911.46 1280.07V1138.58h0.6V1280.07zM929.89 1264.98V1254.87h0.6V1264.98zM939.87 1267.32V1229.59h0.6V1267.32zM942.27 1275.93V1194.20h0.6V1275.93zM946.71 1280.15V1103.19h0.6V1280.15zM948.74 1272.80V1098.14h0.6V1272.80zM955.95 1275.05V1158.81h0.6V1275.05zM961.47 1262.98V1209.37h0.6V1262.98zM979.24 1279.68V1219.48h0.6V1279.68zM988.21 1269.47V1022.30h0.6V1269.47zM993.58 1272.74V1184.09h0.6V1272.74zM1003.55 1275.64V1239.70h0.6V1275.64zM1016.19 1269.68V1214.42h0.6V1269.68zM1018.30 1279.59V1118.36h0.6V1279.59zM1021.63 1266.15V1168.92h0.6V1266.15zM1033.78 1275.56V1234.65h0.6V1275.56zM1037.15 1267.53V1219.48h0.6V1267.53zM1222.31 1266.79V1108.25h0.6V1266.79zM1230.29 1264.19V1168.92h0.6V1264.19zM1245.60 1277.58V911.06h0.6V1277.58zM1253.65 1263.44V1017.24h0.6V1263.44zM1262.56 1279.86V1244.76h0.6V1279.86zM1277.06 1275.06V1148.70h0.6V1275.06zM1283.49 1271.68V1057.69h0.6V1271.68zM1308.11 1271.25V1158.81h0.6V1271.25zM1310.33 1263.99V1002.07h0.6V1263.99zM1328.29 1268.82V1118.36h0.6V1268.82zM1330.95 1264.53V1012.18h0.6V1264.53zM1549.43 1277.69V1234.65h0.6V1277.69zM1551.06 1275.29V1138.58h0.6V1275.29zM1560.94 1265.67V1067.80h0.6V1265.67zM1563.67 1262.30V1002.07h0.6V1262.30zM1564.98 1260.89V1098.14h0.6V1260.89zM1574.09 1271.42V966.68h0.6V1271.42zM1578.89 1273.71V911.06h0.6V1273.71zM1580.66 1268.95V1249.82h0.6V1268.95zM1583.19 1273.45V1199.26h0.6V1273.45zM1587.92 1260.23V1194.20h0.6V1260.23zM1591.16 1274.78V1194.20h0.6V1274.78zM1596.24 1277.53V1077.91h0.6V1277.53zM1603.75 1277.13V1219.48h0.6V1277.13zM1610.06 1278.99V1153.75h0.6V1278.99zM1622.43 1262.84V1138.58h0.6V1262.84zM1636.56 1277.54V971.74h0.6V1277.54zM1638.20 1277.94V1179.03h0.6V1277.94zM1640.68 1276.07V1163.86h0.6V1276.07zM1642.87 1264.79V1209.37h0.6V1264.79zM1646.89 1273.13V1189.14h0.6V1273.13zM1659.54 1270.55V1234.65h0.6V1270.55zM1660.95 1263.59V1128.47h0.6V1263.59zM1863.34 1277.53V1239.70h0.6V1277.53zM1867.82 1276.85V1037.46h0.6V1276.85zM1877.08 1275.25V1184.09h0.6V1275.25zM1887.11 1260.70V1143.64h0.6V1260.70zM1894.45 1272.94V1199.26h0.6V1272.94zM1903.38 1269.94V1032.41h0.6V1269.94zM1906.25 1278.34V1088.02h0.6V1278.34zM1908.33 1279.70V1179.03h0.6V1279.70zM1910.93 1268.31V1088.02h0.6V1268.31zM1923.69 1260.24V1189.14h0.6V1260.24zM1931.59 1263.26V1204.31h0.6V1263.26z" fill="#5cb096"/>
<rect x="166.4" y="815.0" width="1.6" height="506.3999999999999" fill="#5a5a5a"/>
<rect x="166.4" y="1320.6999999999998" width="2250.2" height="1.6" fill="#5a5a5a"/>
<rect x="157.0" y="1320" width="10" height="1" fill="#8c8c8c"/>
<text x="146.3" y="1326.6" font-size="20.3" text-anchor="end" font-weight="normal" fill="#3a3a3a" stroke="#3a3a3a" stroke-width="0.35" textLength="11.8" lengthAdjust="spacingAndGlyphs" >0</text>
<rect x="157.0" y="1270" width="10" height="1" fill="#8c8c8c"/>
<text x="146.3" y="1276.0" font-size="20.3" text-anchor="end" font-weight="normal" fill="#3a3a3a" stroke="#3a3a3a" stroke-width="0.35" textLength="24.0" lengthAdjust="spacingAndGlyphs" >10</text>
<rect x="157.0" y="1219" width="10" height="1" fill="#8c8c8c"/>
<text x="146.3" y="1225.5" font-size="20.3" text-anchor="end" font-weight="normal" fill="#3a3a3a" stroke="#3a3a3a" stroke-width="0.35" textLength="24.0" lengthAdjust="spacingAndGlyphs" >20</text>
<rect x="157.0" y="1168" width="10" height="1" fill="#8c8c8c"/>
<text x="146.3" y="1174.9" font-size="20.3" text-anchor="end" font-weight="normal" fill="#3a3a3a" stroke="#3a3a3a" stroke-width="0.35" textLength="24.0" lengthAdjust="spacingAndGlyphs" >30</text>
<rect x="157.0" y="1118" width="10" height="1" fill="#8c8c8c"/>
<text x="146.3" y="1124.4" font-size="20.3" text-anchor="end" font-weight="normal" fill="#3a3a3a" stroke="#3a3a3a" stroke-width="0.35" textLength="24.0" lengthAdjust="spacingAndGlyphs" >40</text>
<rect x="157.0" y="1067" width="10" height="1" fill="#8c8c8c"/>
<text x="146.3" y="1073.8" font-size="20.3" text-anchor="end" font-weight="normal" fill="#3a3a3a" stroke="#3a3a3a" stroke-width="0.35" textLength="24.0" lengthAdjust="spacingAndGlyphs" >50</text>
<rect x="157.0" y="1017" width="10" height="1" fill="#8c8c8c"/>
<text x="146.3" y="1023.2" font-size="20.3" text-anchor="end" font-weight="normal" fill="#3a3a3a" stroke="#3a3a3a" stroke-width="0.35" textLength="24.0" lengthAdjust="spacingAndGlyphs" >60</text>
<rect x="157.0" y="966" width="10" height="1" fill="#8c8c8c"/>
<text x="146.3" y="972.7" font-size="20.3" text-anchor="end" font-weight="normal" fill="#3a3a3a" stroke="#3a3a3a" stroke-width="0.35" textLength="24.0" lengthAdjust="spacingAndGlyphs" >70</text>
<rect x="157.0" y="916" width="10" height="1" fill="#8c8c8c"/>
<text x="146.3" y="922.1" font-size="20.3" text-anchor="end" font-weight="normal" fill="#3a3a3a" stroke="#3a3a3a" stroke-width="0.35" textLength="24.0" lengthAdjust="spacingAndGlyphs" >80</text>
<rect x="157.0" y="865" width="10" height="1" fill="#8c8c8c"/>
<text x="146.3" y="871.6" font-size="20.3" text-anchor="end" font-weight="normal" fill="#3a3a3a" stroke="#3a3a3a" stroke-width="0.35" textLength="24.0" lengthAdjust="spacingAndGlyphs" >90</text>
<rect x="157.0" y="815" width="10" height="1" fill="#8c8c8c"/>
<text x="146.3" y="821.0" font-size="20.3" text-anchor="end" font-weight="normal" fill="#3a3a3a" stroke="#3a3a3a" stroke-width="0.35" textLength="37.0" lengthAdjust="spacingAndGlyphs" >100</text>
<rect x="167.40" y="1321.6" width="1.2" height="11" fill="#a0a0a0"/>
<text x="168.3" y="1356.8" font-size="19.7" text-anchor="middle" font-weight="normal" fill="#1c1c1c" stroke="#1c1c1c" stroke-width="0.35" textLength="76" lengthAdjust="spacingAndGlyphs" >dim. 25</text>
<rect x="488.60" y="1321.6" width="1.2" height="11" fill="#a0a0a0"/>
<text x="489.5" y="1356.8" font-size="19.7" text-anchor="middle" font-weight="normal" fill="#1c1c1c" stroke="#1c1c1c" stroke-width="0.35" textLength="69" lengthAdjust="spacingAndGlyphs" >lun. 26</text>
<rect x="809.80" y="1321.6" width="1.2" height="11" fill="#a0a0a0"/>
<text x="810.7" y="1356.8" font-size="19.7" text-anchor="middle" font-weight="normal" fill="#1c1c1c" stroke="#1c1c1c" stroke-width="0.35" textLength="77.5" lengthAdjust="spacingAndGlyphs" >mar. 27</text>
<rect x="1131.00" y="1321.6" width="1.2" height="11" fill="#a0a0a0"/>
<text x="1131.9" y="1356.8" font-size="19.7" text-anchor="middle" font-weight="normal" fill="#1c1c1c" stroke="#1c1c1c" stroke-width="0.35" textLength="77" lengthAdjust="spacingAndGlyphs" >mer. 28</text>
<rect x="1452.20" y="1321.6" width="1.2" height="11" fill="#a0a0a0"/>
<text x="1453.1" y="1356.8" font-size="19.7" text-anchor="middle" font-weight="normal" fill="#1c1c1c" stroke="#1c1c1c" stroke-width="0.35" textLength="70.5" lengthAdjust="spacingAndGlyphs" >jeu. 29</text>
<rect x="1773.40" y="1321.6" width="1.2" height="11" fill="#a0a0a0"/>
<text x="1774.3" y="1356.8" font-size="19.7" text-anchor="middle" font-weight="normal" fill="#1c1c1c" stroke="#1c1c1c" stroke-width="0.35" textLength="76" lengthAdjust="spacingAndGlyphs" >ven. 30</text>
<rect x="2094.60" y="1321.6" width="1.2" height="11" fill="#a0a0a0"/>
<text x="2095.5" y="1356.8" font-size="19.7" text-anchor="middle" font-weight="normal" fill="#1c1c1c" stroke="#1c1c1c" stroke-width="0.35" textLength="80" lengthAdjust="spacingAndGlyphs" >sam. 31</text>
<text x="0" y="0" font-size="21.4" text-anchor="middle" font-weight="normal" fill="#3a3a3a" stroke="#3a3a3a" stroke-width="0.35" textLength="31" lengthAdjust="spacingAndGlyphs" transform="translate(86.3 1067.5) rotate(-90)">kW</text>
<rect x="562.35" y="806.2" width="411.7" height="57.2" rx="9.5" fill="#fff" stroke="#808080" stroke-width="3.5"/>
<text x="777.6" y="845.4" font-size="27" text-anchor="middle" font-weight="normal" fill="#000" stroke="#000" stroke-width="0.35" textLength="335" lengthAdjust="spacingAndGlyphs" >Consommation: 1 938 kWh</text>
<rect x="1100.15" y="806.2" width="411.7" height="57.2" rx="9.5" fill="#fff" stroke="#808080" stroke-width="3.5"/>
<text x="1316" y="845.4" font-size="27" text-anchor="middle" font-weight="normal" fill="#000" stroke="#000" stroke-width="0.35" textLength="188" lengthAdjust="spacingAndGlyphs" >P Max :&#160;&#160;94 kW</text>
<rect x="1609.75" y="806.2" width="411.7" height="57.2" rx="9.5" fill="#fff" stroke="#808080" stroke-width="3.5"/>
<text x="1826" y="845.4" font-size="27" text-anchor="middle" font-weight="normal" fill="#000" stroke="#000" stroke-width="0.35" textLength="160" lengthAdjust="spacingAndGlyphs" >P min : 2 kW</text>
<rect x="2322.3" y="1322.2" width="115.5" height="57.5" fill="#fff"/>
<g id="g2e">
<path d="M2360.600 1343.800 A 11.700 11.700 0 1 0 2360.700 1352 L2350.500 1352" fill="none" stroke="#0b6fb8" stroke-width="6" stroke-linecap="round" stroke-linejoin="round"/>
<path d="M2370.800 1349.700 A 7.300 7.300 0 1 1 2382.500 1351.500 L2371.500 1362.800 L2386 1362.800" fill="none" stroke="#0b6fb8" stroke-width="5.200" stroke-linejoin="miter"/>
<path d="M2392.300 1324.600 L2383.500 1338.200 L2391.300 1340.200 L2389.400 1363.200 L2400 1337.800 L2392.500 1335.800z" fill="#e95b28"/>
<path d="M2402.500 1339.100 H2424.400 L2419.600 1344.800 H2400.700z M2398.600 1348.100 H2418.300 L2413.600 1353.800 H2396.800z M2394.400 1357.200 H2416.600 L2411.800 1363.100 H2392.500z" fill="#f19020"/>
<text x="2393.600" y="1334.800" font-size="8" font-weight="bold" fill="#e95b28" textLength="30.400" lengthAdjust="spacingAndGlyphs">FRANCE</text>
<text x="2339.800" y="1368.400" font-size="4" fill="#3a7fc0" textLength="74" lengthAdjust="spacingAndGlyphs">Optimisation des ressources énergétiques</text>
</g>
<rect x="2509" y="0" width="1" height="1414" fill="#606060"/><rect x="0" y="1413" width="2510" height="1" fill="#606060"/>
<rect x="2510" y="0" width="1" height="1415" fill="#000"/><rect x="0" y="1414" width="2511" height="1" fill="#000"/>
</svg>
</body></html>
